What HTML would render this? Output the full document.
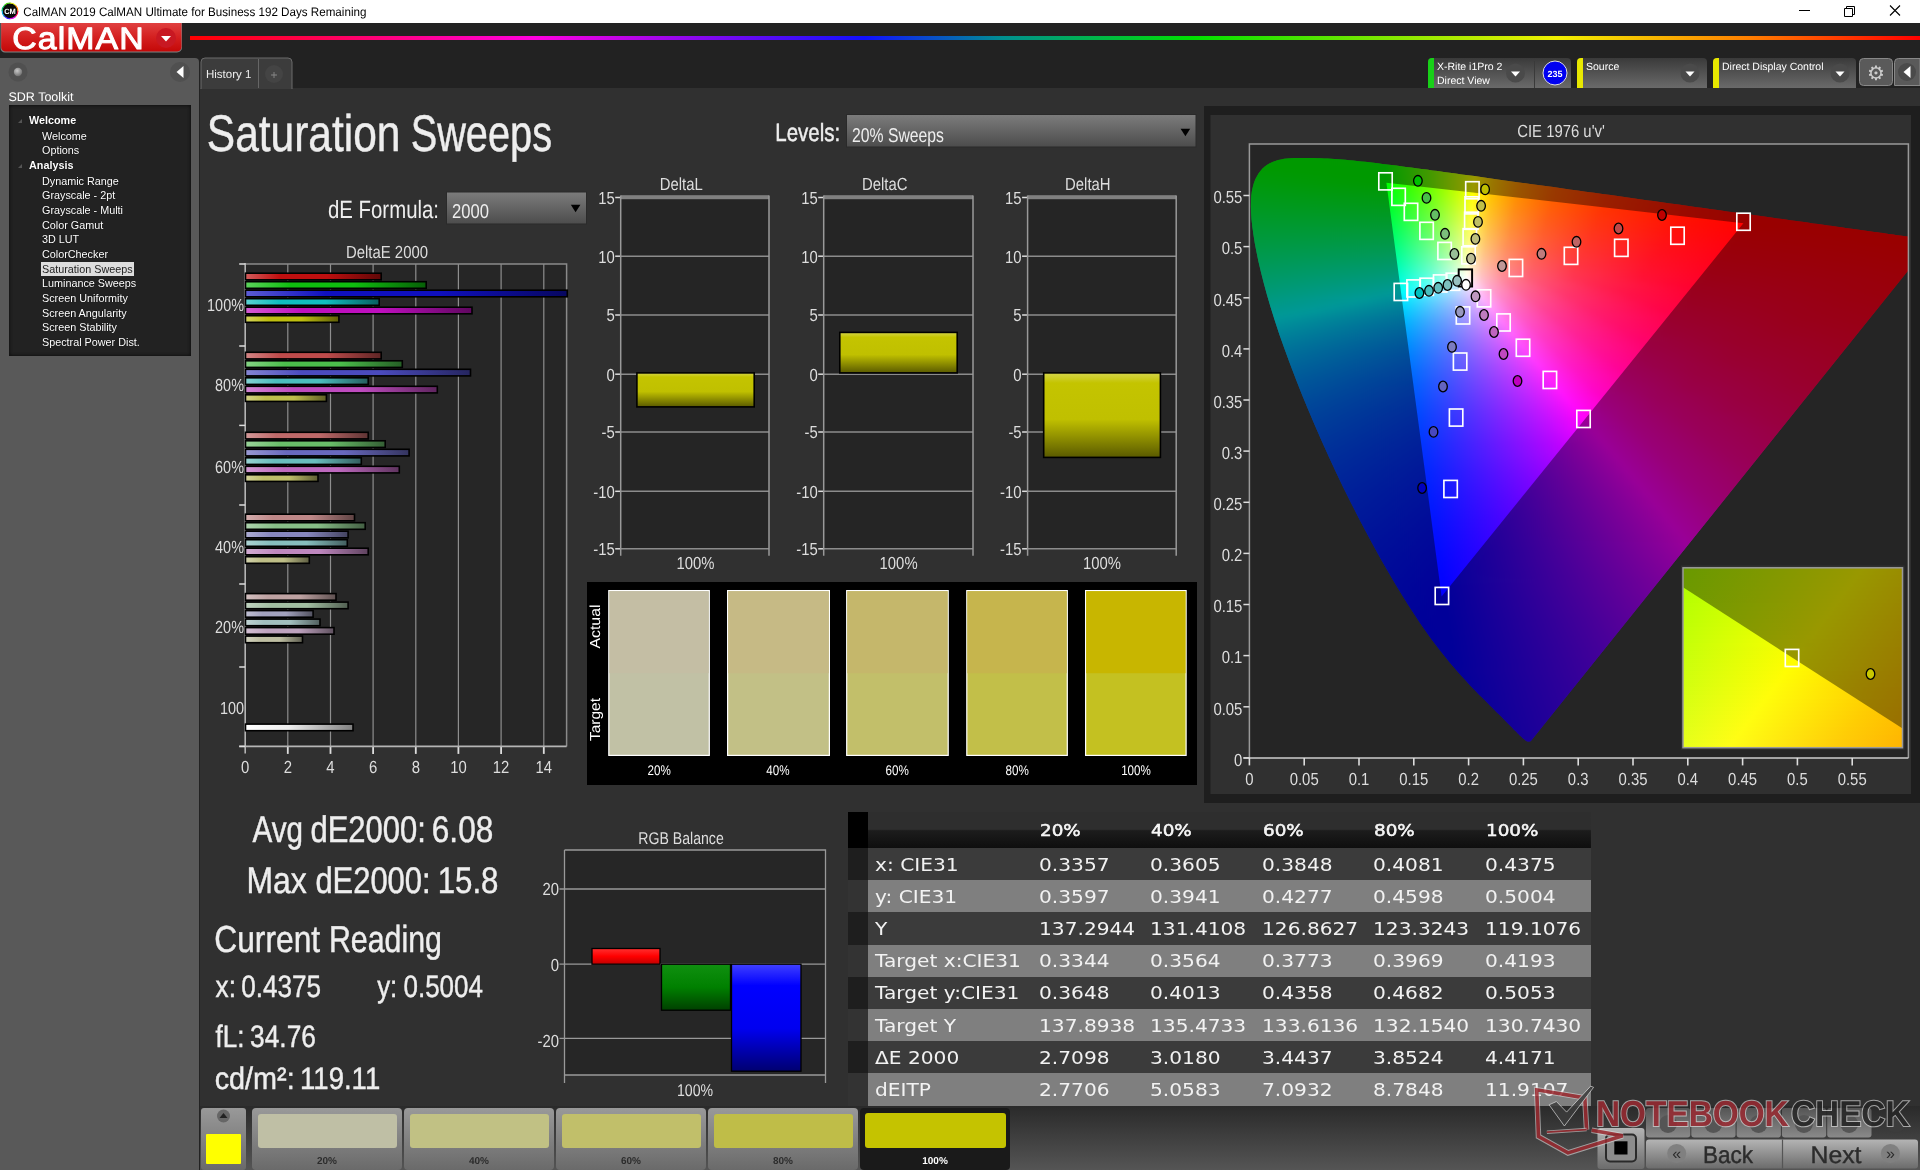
<!DOCTYPE html>
<html lang="en"><head><meta charset="utf-8"><title>CalMAN 2019 - Saturation Sweeps</title>
<style>
html,body{margin:0;padding:0;background:#222;}
body{width:1920px;height:1170px;position:relative;overflow:hidden;font-family:"Liberation Sans",sans-serif;color:#eee;}
.abs{position:absolute;}
#titlebar,#tree,#tbl{will-change:transform}
#titlebar{left:0;top:0;width:1920px;height:23px;background:#fff;color:#000;font-size:11.8px;line-height:25px;}
#titlebar span.t{position:absolute;left:23px;top:0;white-space:nowrap;letter-spacing:-0.1px}
#side{left:0;top:58px;width:199px;height:1112px;background:#595959;border-top-right-radius:4px}
#tree{left:9px;top:105px;width:182px;height:251px;background:#222;box-shadow:inset 0 0 3px 1px #111;}
#tree div{position:absolute;white-space:nowrap;font-size:10.8px;line-height:14px;color:#fff;text-shadow:0 0 1px #000}
#tree div.b{font-weight:bold;left:20px}
#tree div.i{left:33px}
#tree div.sel{background:#ddd;color:#222;text-shadow:none;padding:0 1px;margin-left:-1px}
#main{left:200px;top:88px;width:1720px;height:1018px;background:#303030}
svg text{font-family:"Liberation Sans",sans-serif;text-rendering:geometricPrecision}
#tbl th{padding:0}
#tbl td span{display:inline-block;transform:scaleX(1.12);transform-origin:left center}
#tbl th span{display:inline-block;font-weight:normal;-webkit-text-stroke:0.5px #fff;font-size:16.7px;position:relative;top:-0.7px;left:1px;transform:scaleX(1.1);transform-origin:left center}
#tbl{left:848px;top:812px;width:743px;table-layout:fixed;border-collapse:collapse;font-family:"DejaVu Sans","Liberation Sans",sans-serif;font-size:18px;color:#f2f2f2}
</style></head><body>

<div id="titlebar" class="abs"></div>
<div id="side" class="abs"></div>
<div id="main" class="abs"></div>
<div id="tree" class="abs">
<div class="b" style="top:8px">Welcome</div>
<div class="i" style="top:24px">Welcome</div>
<div class="i" style="top:38px">Options</div>
<div class="b" style="top:53px">Analysis</div>
<div class="i" style="top:69px">Dynamic Range</div>
<div class="i" style="top:83px">Grayscale - 2pt</div>
<div class="i" style="top:98px">Grayscale - Multi</div>
<div class="i" style="top:113px">Color Gamut</div>
<div class="i" style="top:127px">3D LUT</div>
<div class="i" style="top:142px">ColorChecker</div>
<div class="i sel" style="top:157px">Saturation Sweeps</div>
<div class="i" style="top:171px">Luminance Sweeps</div>
<div class="i" style="top:186px">Screen Uniformity</div>
<div class="i" style="top:201px">Screen Angularity</div>
<div class="i" style="top:215px">Screen Stability</div>
<div class="i" style="top:230px">Spectral Power Dist.</div>
</div>
<table id="tbl" class="abs"><thead><tr style="height:36px;background:linear-gradient(#2e2e2e 0,#2e2e2e 48%,#1c1c1c 52%,#0e0e0e 100%)"><th style="width:20px;background:#000"></th><th style="width:170.500px"></th>
<th style="text-align:left;font-weight:normal;width:111.65px;padding:0"><span>20%</span></th>
<th style="text-align:left;font-weight:normal;width:111.65px;padding:0"><span>40%</span></th>
<th style="text-align:left;font-weight:normal;width:111.65px;padding:0"><span>60%</span></th>
<th style="text-align:left;font-weight:normal;width:111.65px;padding:0"><span>80%</span></th>
<th style="text-align:left;font-weight:normal;width:105.9px;padding:0"><span>100%</span></th>
</tr></thead><tbody>
<tr style="height:32.200px;background:#3b3b3b"><td style="background:#1e1e1e;padding:0"></td><td style="padding:0 0 0 6.500px;white-space:nowrap"><span>x: CIE31</span></td><td style="padding:0;white-space:nowrap"><span>0.3357</span></td><td style="padding:0;white-space:nowrap"><span>0.3605</span></td><td style="padding:0;white-space:nowrap"><span>0.3848</span></td><td style="padding:0;white-space:nowrap"><span>0.4081</span></td><td style="padding:0;white-space:nowrap"><span>0.4375</span></td></tr>
<tr style="height:32.200px;background:#7f7f7f"><td style="background:#333;padding:0"></td><td style="padding:0 0 0 6.500px;white-space:nowrap"><span>y: CIE31</span></td><td style="padding:0;white-space:nowrap"><span>0.3597</span></td><td style="padding:0;white-space:nowrap"><span>0.3941</span></td><td style="padding:0;white-space:nowrap"><span>0.4277</span></td><td style="padding:0;white-space:nowrap"><span>0.4598</span></td><td style="padding:0;white-space:nowrap"><span>0.5004</span></td></tr>
<tr style="height:32.200px;background:#3b3b3b"><td style="background:#1e1e1e;padding:0"></td><td style="padding:0 0 0 6.500px;white-space:nowrap"><span>Y</span></td><td style="padding:0;white-space:nowrap"><span>137.2944</span></td><td style="padding:0;white-space:nowrap"><span>131.4108</span></td><td style="padding:0;white-space:nowrap"><span>126.8627</span></td><td style="padding:0;white-space:nowrap"><span>123.3243</span></td><td style="padding:0;white-space:nowrap"><span>119.1076</span></td></tr>
<tr style="height:32.200px;background:#7f7f7f"><td style="background:#333;padding:0"></td><td style="padding:0 0 0 6.500px;white-space:nowrap"><span>Target x:CIE31</span></td><td style="padding:0;white-space:nowrap"><span>0.3344</span></td><td style="padding:0;white-space:nowrap"><span>0.3564</span></td><td style="padding:0;white-space:nowrap"><span>0.3773</span></td><td style="padding:0;white-space:nowrap"><span>0.3969</span></td><td style="padding:0;white-space:nowrap"><span>0.4193</span></td></tr>
<tr style="height:32.200px;background:#3b3b3b"><td style="background:#1e1e1e;padding:0"></td><td style="padding:0 0 0 6.500px;white-space:nowrap"><span>Target y:CIE31</span></td><td style="padding:0;white-space:nowrap"><span>0.3648</span></td><td style="padding:0;white-space:nowrap"><span>0.4013</span></td><td style="padding:0;white-space:nowrap"><span>0.4358</span></td><td style="padding:0;white-space:nowrap"><span>0.4682</span></td><td style="padding:0;white-space:nowrap"><span>0.5053</span></td></tr>
<tr style="height:32.200px;background:#7f7f7f"><td style="background:#333;padding:0"></td><td style="padding:0 0 0 6.500px;white-space:nowrap"><span>Target Y</span></td><td style="padding:0;white-space:nowrap"><span>137.8938</span></td><td style="padding:0;white-space:nowrap"><span>135.4733</span></td><td style="padding:0;white-space:nowrap"><span>133.6136</span></td><td style="padding:0;white-space:nowrap"><span>132.1540</span></td><td style="padding:0;white-space:nowrap"><span>130.7430</span></td></tr>
<tr style="height:32.200px;background:#3b3b3b"><td style="background:#1e1e1e;padding:0"></td><td style="padding:0 0 0 6.500px;white-space:nowrap"><span>ΔE 2000</span></td><td style="padding:0;white-space:nowrap"><span>2.7098</span></td><td style="padding:0;white-space:nowrap"><span>3.0180</span></td><td style="padding:0;white-space:nowrap"><span>3.4437</span></td><td style="padding:0;white-space:nowrap"><span>3.8524</span></td><td style="padding:0;white-space:nowrap"><span>4.4171</span></td></tr>
<tr style="height:32.200px;background:#7f7f7f"><td style="background:#333;padding:0"></td><td style="padding:0 0 0 6.500px;white-space:nowrap"><span>dEITP</span></td><td style="padding:0;white-space:nowrap"><span>2.7706</span></td><td style="padding:0;white-space:nowrap"><span>5.0583</span></td><td style="padding:0;white-space:nowrap"><span>7.0932</span></td><td style="padding:0;white-space:nowrap"><span>8.7848</span></td><td style="padding:0;white-space:nowrap"><span>11.9107</span></td></tr>
</tbody></table>
<svg class="abs" style="left:0;top:0;will-change:transform" width="1920" height="1170" viewBox="0 0 1920 1170">
<defs>
<linearGradient id="rain" x1="0" x2="1" y1="0" y2="0">
<stop offset="0" stop-color="#ff0000"/><stop offset="0.2" stop-color="#ff00e0"/><stop offset="0.39" stop-color="#1010ff"/>
<stop offset="0.47" stop-color="#009090"/><stop offset="0.58" stop-color="#00e000"/><stop offset="0.79" stop-color="#f0f000"/>
<stop offset="0.9" stop-color="#ff8000"/><stop offset="1" stop-color="#ff0000"/></linearGradient>
<linearGradient id="redbtn" x1="0" x2="0" y1="0" y2="1"><stop offset="0" stop-color="#e04040"/><stop offset="0.5" stop-color="#d42020"/><stop offset="1" stop-color="#c40808"/></linearGradient>
<linearGradient id="tbbtn" x1="0" x2="0" y1="0" y2="1"><stop offset="0" stop-color="#3a3a3a"/><stop offset="1" stop-color="#6a6a6a"/></linearGradient>
<linearGradient id="ddg" x1="0" x2="0" y1="0" y2="1"><stop offset="0" stop-color="#7c7c7c"/><stop offset="1" stop-color="#4c4c4c"/></linearGradient>
<linearGradient id="botg" x1="0" x2="0" y1="0" y2="1"><stop offset="0" stop-color="#2a2a2a"/><stop offset="1" stop-color="#555"/></linearGradient>
<linearGradient id="swb" x1="0" x2="0" y1="0" y2="1"><stop offset="0" stop-color="#999"/><stop offset="1" stop-color="#6a6a6a"/></linearGradient>
<linearGradient id="ybar" x1="0" x2="0" y1="0" y2="1"><stop offset="0" stop-color="#d4d44a"/><stop offset="0.12" stop-color="#c4c400"/><stop offset="0.55" stop-color="#c0c000"/><stop offset="1" stop-color="#5a5a00"/></linearGradient>
<linearGradient id="rbar" x1="0" x2="0" y1="0" y2="1"><stop offset="0" stop-color="#ff3030"/><stop offset="0.5" stop-color="#ff0000"/><stop offset="1" stop-color="#c00000"/></linearGradient>
<linearGradient id="gbar" x1="0" x2="0" y1="0" y2="1"><stop offset="0" stop-color="#109010"/><stop offset="0.5" stop-color="#008000"/><stop offset="1" stop-color="#004000"/></linearGradient>
<linearGradient id="bbar" x1="0" x2="0" y1="0" y2="1"><stop offset="0" stop-color="#4040ff"/><stop offset="0.2" stop-color="#0000ff"/><stop offset="0.6" stop-color="#0000f0"/><stop offset="1" stop-color="#000070"/></linearGradient>

</defs>
<rect x="190" y="36" width="1730" height="4" fill="url(#rain)"/>
<path d="M0.500 23H182V47.500a5 5 0 0 1-5 5H5a4.500 4.500 0 0 1-4.500-4.500Z" fill="#7c8484"/><path d="M1.200 23H181.500V47a4.500 4.500 0 0 1-4.500 4.500H5.500a4.300 4.300 0 0 1-4.300-4.300Z" fill="url(#redbtn)"/>
<text x="12.300" y="48.600" font-size="31" fill="#fff" stroke="#fff" stroke-width="1" stroke-linejoin="round" textLength="132.500" lengthAdjust="spacingAndGlyphs" letter-spacing="1">CalMAN</text>
<circle cx="166" cy="38" r="10" fill="#c81822"/><path d="M161 36h10l-5 5.5z" fill="#fff"/>
<circle cx="10" cy="10.900" r="7.600" fill="#0a0a0a"/><path d="M10.00 3.00A7.9 7.9 0 0 1 15.86 5.60" fill="none" stroke="#e8e800" stroke-width="1.1"/><path d="M15.59 5.31A7.9 7.9 0 0 1 17.89 11.29" fill="none" stroke="#ff8000" stroke-width="1.1"/><path d="M17.90 10.90A7.9 7.9 0 0 1 15.30 16.76" fill="none" stroke="#ff0040" stroke-width="1.1"/><path d="M15.59 16.49A7.9 7.9 0 0 1 9.61 18.79" fill="none" stroke="#e000e0" stroke-width="1.1"/><path d="M10.00 18.80A7.9 7.9 0 0 1 4.14 16.20" fill="none" stroke="#4020ff" stroke-width="1.1"/><path d="M4.41 16.49A7.9 7.9 0 0 1 2.11 10.51" fill="none" stroke="#00a0e0" stroke-width="1.1"/><path d="M2.10 10.90A7.9 7.9 0 0 1 4.70 5.04" fill="none" stroke="#00c060" stroke-width="1.1"/><path d="M4.41 5.31A7.9 7.9 0 0 1 10.39 3.01" fill="none" stroke="#40d000" stroke-width="1.1"/><text x="10" y="13.600" font-size="7.500" font-weight="bold" fill="#fff" text-anchor="middle">CM</text>
<text x="23.3" y="15.6" font-size="12.3" fill="#000" textLength="343.1" lengthAdjust="spacingAndGlyphs">CalMAN 2019 CalMAN Ultimate for Business 192 Days Remaining</text>
<path d="M1799 10.5h11" stroke="#000" stroke-width="1"/><path d="M1844.5 8.500h8v8h-8z M1846.500 8.500v-2h8v8h-2" fill="none" stroke="#000" stroke-width="1"/><path d="M1890 5.500l10 10M1900 5.500l-10 10" stroke="#000" stroke-width="1.1"/>
<radialGradient id="sph" cx="0.4" cy="0.35" r="0.7"><stop offset="0" stop-color="#c8c8c8"/><stop offset="1" stop-color="#6a6a6a"/></radialGradient><circle cx="18" cy="72" r="9.500" fill="#505050"/><circle cx="18" cy="72" r="4.200" fill="url(#sph)"/>
<circle cx="180" cy="72" r="10" fill="#505050"/><path d="M183.500 66v12l-7-6z" fill="#fff"/>
<text x="8.500" y="101" font-size="12.500" fill="#fff">SDR Toolkit</text>
<path d="M22 119v4h-4z" fill="#555"/>
<path d="M22 164v4h-4z" fill="#555"/>
<path d="M201 89V62a4 4 0 0 1 4-4H288a4 4 0 0 1 4 4V89" fill="#3c3c3c" stroke="#6a6a6a" stroke-width="1"/>
<path d="M258.500 59v29" stroke="#666"/>
<text x="206" y="78" font-size="11.500" fill="#eee">History 1</text>
<circle cx="274" cy="74" r="9" fill="#444"/><text x="274" y="78.500" font-size="12" fill="#888" text-anchor="middle">+</text>
<path d="M1428 88V62a4 4 0 0 1 4-4H1567a4 4 0 0 1 4 4V88Z" fill="url(#tbbtn)"/>
<path d="M1428 88V62a4 4 0 0 1 4-4h2V88Z" fill="#18d018"/>
<text x="1437" y="70" font-size="10.500" fill="#fff">X-Rite i1Pro 2</text>
<text x="1437" y="84" font-size="10.500" fill="#fff">Direct View</text>
<circle cx="1515.5" cy="73" r="9.500" fill="#4a4a4a"/><path d="M1511.0 71.500h9l-4.500 5z" fill="#fff"/>
<path d="M1534.500 61v27" stroke="#3a3a3a"/>
<circle cx="1555" cy="73" r="12" fill="#0000f0" stroke="#ddd" stroke-width="1"/><text x="1555" y="76.500" font-size="9" font-weight="bold" fill="#fff" text-anchor="middle">235</text>
<path d="M1577 88V62a4 4 0 0 1 4-4H1703a4 4 0 0 1 4 4V88Z" fill="url(#tbbtn)"/>
<path d="M1577 88V62a4 4 0 0 1 4-4h2V88Z" fill="#e8e800"/>
<text x="1586" y="70" font-size="10.500" fill="#fff">Source</text>
<circle cx="1690" cy="73" r="9.500" fill="#4a4a4a"/><path d="M1685.5 71.500h9l-4.500 5z" fill="#fff"/>
<path d="M1713 88V62a4 4 0 0 1 4-4H1852a4 4 0 0 1 4 4V88Z" fill="url(#tbbtn)"/>
<path d="M1713 88V62a4 4 0 0 1 4-4h2V88Z" fill="#e8e800"/>
<text x="1722" y="70" font-size="10.500" fill="#fff">Direct Display Control</text>
<circle cx="1840" cy="73" r="9.500" fill="#4a4a4a"/><path d="M1835.5 71.500h9l-4.500 5z" fill="#fff"/>
<rect x="1859.500" y="58.500" width="33" height="27" rx="4" fill="#5a5a5a" stroke="#888"/>
<text x="1876" y="80" font-size="20" fill="#ccc" text-anchor="middle">⚙</text>
<path d="M1894.500 85.500V62.500a4 4 0 0 1 4-4H1920V85.500Z" fill="#5a5a5a" stroke="#888"/><circle cx="1907" cy="72" r="9" fill="#4a4a4a"/><path d="M1910.500 66v12l-7-6z" fill="#fff"/>
<text x="206.8" y="151.0" font-size="51.5" fill="#eee" textLength="193.7" lengthAdjust="spacingAndGlyphs" stroke="#eee" stroke-width="0.45">Saturation</text>
<text x="410.7" y="151.0" font-size="51.5" fill="#eee" textLength="141.3" lengthAdjust="spacingAndGlyphs" stroke="#eee" stroke-width="0.45">Sweeps</text>
<text x="775.3" y="141.0" font-size="25" fill="#eee" textLength="65.0" lengthAdjust="spacingAndGlyphs" stroke="#eee" stroke-width="0.45">Levels:</text>
<rect x="846.500" y="114.500" width="349.500" height="32.500" fill="url(#ddg)" stroke="#2a2a2a"/>
<text x="852.0" y="142.0" font-size="20" text-anchor="start" fill="#eee" textLength="92.0" lengthAdjust="spacingAndGlyphs">20% Sweeps</text>
<path d="M1180.600 128.700h9.600l-4.800 7.500z" fill="#000"/>
<text x="439.0" y="218.0" font-size="25" text-anchor="end" fill="#eee" textLength="111.0" lengthAdjust="spacingAndGlyphs">dE Formula:</text>
<rect x="446.500" y="192" width="140" height="32" fill="url(#ddg)" stroke="#2a2a2a"/>
<text x="452.0" y="218.0" font-size="20" text-anchor="start" fill="#eee" textLength="37.0" lengthAdjust="spacingAndGlyphs">2000</text>
<path d="M570.800 204.800h9.600l-4.800 7.500z" fill="#000"/>
<rect x="245.2" y="264" width="321.40000000000003" height="482.4" fill="#262626"/>
<path d="M287.8 264V746.4" stroke="#8e8e8e" stroke-width="1.2"/><path d="M287.8 746.4v7.500" stroke="#ddd" stroke-width="1.8"/>
<text x="287.8" y="773.0" font-size="17.5" text-anchor="middle" fill="#ddd" textLength="8.3" lengthAdjust="spacingAndGlyphs">2</text>
<path d="M330.5 264V746.4" stroke="#8e8e8e" stroke-width="1.2"/><path d="M330.5 746.4v7.500" stroke="#ddd" stroke-width="1.8"/>
<text x="330.5" y="773.0" font-size="17.5" text-anchor="middle" fill="#ddd" textLength="8.3" lengthAdjust="spacingAndGlyphs">4</text>
<path d="M373.1 264V746.4" stroke="#8e8e8e" stroke-width="1.2"/><path d="M373.1 746.4v7.500" stroke="#ddd" stroke-width="1.8"/>
<text x="373.1" y="773.0" font-size="17.5" text-anchor="middle" fill="#ddd" textLength="8.3" lengthAdjust="spacingAndGlyphs">6</text>
<path d="M415.8 264V746.4" stroke="#8e8e8e" stroke-width="1.2"/><path d="M415.8 746.4v7.500" stroke="#ddd" stroke-width="1.8"/>
<text x="415.8" y="773.0" font-size="17.5" text-anchor="middle" fill="#ddd" textLength="8.3" lengthAdjust="spacingAndGlyphs">8</text>
<path d="M458.4 264V746.4" stroke="#8e8e8e" stroke-width="1.2"/><path d="M458.4 746.4v7.500" stroke="#ddd" stroke-width="1.8"/>
<text x="458.4" y="773.0" font-size="17.5" text-anchor="middle" fill="#ddd" textLength="16.5" lengthAdjust="spacingAndGlyphs">10</text>
<path d="M501.1 264V746.4" stroke="#8e8e8e" stroke-width="1.2"/><path d="M501.1 746.4v7.500" stroke="#ddd" stroke-width="1.8"/>
<text x="501.1" y="773.0" font-size="17.5" text-anchor="middle" fill="#ddd" textLength="16.5" lengthAdjust="spacingAndGlyphs">12</text>
<path d="M543.8 264V746.4" stroke="#8e8e8e" stroke-width="1.2"/><path d="M543.8 746.4v7.500" stroke="#ddd" stroke-width="1.8"/>
<text x="543.8" y="773.0" font-size="17.5" text-anchor="middle" fill="#ddd" textLength="16.5" lengthAdjust="spacingAndGlyphs">14</text>
<text x="245.2" y="773.0" font-size="17.5" text-anchor="middle" fill="#ddd" textLength="8.3" lengthAdjust="spacingAndGlyphs">0</text>
<path d="M245.2 264H566.6V746.4" fill="none" stroke="#8a8a8a" stroke-width="1.5"/>
<path d="M245.2 263V753.4M239.2 746.4H566.6" fill="none" stroke="#b4b4b4" stroke-width="1.6"/>
<path d="M239.2 264.0H245.2" stroke="#ddd" stroke-width="1.5"/>
<path d="M239.2 346.0H245.2" stroke="#ddd" stroke-width="1.5"/>
<path d="M239.2 425.4H245.2" stroke="#ddd" stroke-width="1.5"/>
<path d="M239.2 505.0H245.2" stroke="#ddd" stroke-width="1.5"/>
<path d="M239.2 584.0H245.2" stroke="#ddd" stroke-width="1.5"/>
<path d="M239.2 667.0H245.2" stroke="#ddd" stroke-width="1.5"/>
<path d="M239.2 746.4H245.2" stroke="#ddd" stroke-width="1.5"/>
<text x="387.0" y="258.0" font-size="17.5" text-anchor="middle" fill="#ddd" textLength="82.0" lengthAdjust="spacingAndGlyphs">DeltaE 2000</text>
<text x="244.0" y="311.3" font-size="17.5" text-anchor="end" fill="#ddd" textLength="36.9" lengthAdjust="spacingAndGlyphs">100%</text>
<text x="244.0" y="391.3" font-size="17.5" text-anchor="end" fill="#ddd" textLength="28.9" lengthAdjust="spacingAndGlyphs">80%</text>
<text x="244.0" y="473.3" font-size="17.5" text-anchor="end" fill="#ddd" textLength="28.9" lengthAdjust="spacingAndGlyphs">60%</text>
<text x="244.0" y="553.3" font-size="17.5" text-anchor="end" fill="#ddd" textLength="28.9" lengthAdjust="spacingAndGlyphs">40%</text>
<text x="244.0" y="633.3" font-size="17.5" text-anchor="end" fill="#ddd" textLength="28.9" lengthAdjust="spacingAndGlyphs">20%</text>
<text x="244.0" y="714.3" font-size="17.5" text-anchor="end" fill="#ddd" textLength="24.1" lengthAdjust="spacingAndGlyphs">100</text>
<linearGradient id="bg1"><stop offset="0" stop-color="rgb(211, 92, 92)"/><stop offset="0.25" stop-color="rgb(190, 15, 15)"/><stop offset="0.6" stop-color="rgb(190, 15, 15)"/><stop offset="1" stop-color="rgb(95, 7, 7)"/></linearGradient>
<rect x="245.5" y="273.2" width="135.7" height="6.600" fill="url(#bg1)" stroke="#000" stroke-width="1.6"/>
<linearGradient id="bg2"><stop offset="0" stop-color="rgb(92, 211, 92)"/><stop offset="0.25" stop-color="rgb(15, 190, 15)"/><stop offset="0.6" stop-color="rgb(15, 190, 15)"/><stop offset="1" stop-color="rgb(7, 95, 7)"/></linearGradient>
<rect x="245.5" y="281.7" width="180.7" height="6.600" fill="url(#bg2)" stroke="#000" stroke-width="1.6"/>
<linearGradient id="bg3"><stop offset="0" stop-color="rgb(92, 92, 211)"/><stop offset="0.25" stop-color="rgb(15, 15, 190)"/><stop offset="0.6" stop-color="rgb(15, 15, 190)"/><stop offset="1" stop-color="rgb(7, 7, 95)"/></linearGradient>
<rect x="245.5" y="290.2" width="321.8" height="6.600" fill="url(#bg3)" stroke="#000" stroke-width="1.6"/>
<linearGradient id="bg4"><stop offset="0" stop-color="rgb(92, 211, 211)"/><stop offset="0.25" stop-color="rgb(15, 190, 190)"/><stop offset="0.6" stop-color="rgb(15, 190, 190)"/><stop offset="1" stop-color="rgb(7, 95, 95)"/></linearGradient>
<rect x="245.5" y="298.7" width="133.7" height="6.600" fill="url(#bg4)" stroke="#000" stroke-width="1.6"/>
<linearGradient id="bg5"><stop offset="0" stop-color="rgb(211, 92, 211)"/><stop offset="0.25" stop-color="rgb(190, 15, 190)"/><stop offset="0.6" stop-color="rgb(190, 15, 190)"/><stop offset="1" stop-color="rgb(95, 7, 95)"/></linearGradient>
<rect x="245.5" y="307.2" width="226.5" height="6.600" fill="url(#bg5)" stroke="#000" stroke-width="1.6"/>
<linearGradient id="bg6"><stop offset="0" stop-color="rgb(211, 211, 92)"/><stop offset="0.25" stop-color="rgb(190, 190, 15)"/><stop offset="0.6" stop-color="rgb(190, 190, 15)"/><stop offset="1" stop-color="rgb(95, 95, 7)"/></linearGradient>
<rect x="245.5" y="315.7" width="93.4" height="6.600" fill="url(#bg6)" stroke="#000" stroke-width="1.6"/>
<linearGradient id="bg7"><stop offset="0" stop-color="rgb(211, 133, 133)"/><stop offset="0.25" stop-color="rgb(190, 75, 75)"/><stop offset="0.6" stop-color="rgb(190, 75, 75)"/><stop offset="1" stop-color="rgb(95, 37, 37)"/></linearGradient>
<rect x="245.5" y="352.3" width="135.7" height="6.600" fill="url(#bg7)" stroke="#000" stroke-width="1.6"/>
<linearGradient id="bg8"><stop offset="0" stop-color="rgb(133, 211, 133)"/><stop offset="0.25" stop-color="rgb(75, 190, 75)"/><stop offset="0.6" stop-color="rgb(75, 190, 75)"/><stop offset="1" stop-color="rgb(37, 95, 37)"/></linearGradient>
<rect x="245.5" y="360.8" width="156.8" height="6.600" fill="url(#bg8)" stroke="#000" stroke-width="1.6"/>
<linearGradient id="bg9"><stop offset="0" stop-color="rgb(133, 133, 211)"/><stop offset="0.25" stop-color="rgb(75, 75, 190)"/><stop offset="0.6" stop-color="rgb(75, 75, 190)"/><stop offset="1" stop-color="rgb(37, 37, 95)"/></linearGradient>
<rect x="245.5" y="369.3" width="225.0" height="6.600" fill="url(#bg9)" stroke="#000" stroke-width="1.6"/>
<linearGradient id="bg10"><stop offset="0" stop-color="rgb(133, 211, 211)"/><stop offset="0.25" stop-color="rgb(75, 190, 190)"/><stop offset="0.6" stop-color="rgb(75, 190, 190)"/><stop offset="1" stop-color="rgb(37, 95, 95)"/></linearGradient>
<rect x="245.5" y="377.8" width="122.7" height="6.600" fill="url(#bg10)" stroke="#000" stroke-width="1.6"/>
<linearGradient id="bg11"><stop offset="0" stop-color="rgb(211, 133, 211)"/><stop offset="0.25" stop-color="rgb(190, 75, 190)"/><stop offset="0.6" stop-color="rgb(190, 75, 190)"/><stop offset="1" stop-color="rgb(95, 37, 95)"/></linearGradient>
<rect x="245.5" y="386.3" width="191.8" height="6.600" fill="url(#bg11)" stroke="#000" stroke-width="1.6"/>
<linearGradient id="bg12"><stop offset="0" stop-color="rgb(211, 211, 133)"/><stop offset="0.25" stop-color="rgb(190, 190, 75)"/><stop offset="0.6" stop-color="rgb(190, 190, 75)"/><stop offset="1" stop-color="rgb(95, 95, 37)"/></linearGradient>
<rect x="245.5" y="394.8" width="80.9" height="6.600" fill="url(#bg12)" stroke="#000" stroke-width="1.6"/>
<linearGradient id="bg13"><stop offset="0" stop-color="rgb(211, 153, 153)"/><stop offset="0.25" stop-color="rgb(190, 105, 105)"/><stop offset="0.6" stop-color="rgb(190, 105, 105)"/><stop offset="1" stop-color="rgb(95, 52, 52)"/></linearGradient>
<rect x="245.5" y="432.3" width="122.7" height="6.600" fill="url(#bg13)" stroke="#000" stroke-width="1.6"/>
<linearGradient id="bg14"><stop offset="0" stop-color="rgb(153, 211, 153)"/><stop offset="0.25" stop-color="rgb(105, 190, 105)"/><stop offset="0.6" stop-color="rgb(105, 190, 105)"/><stop offset="1" stop-color="rgb(52, 95, 52)"/></linearGradient>
<rect x="245.5" y="440.8" width="139.7" height="6.600" fill="url(#bg14)" stroke="#000" stroke-width="1.6"/>
<linearGradient id="bg15"><stop offset="0" stop-color="rgb(153, 153, 211)"/><stop offset="0.25" stop-color="rgb(105, 105, 190)"/><stop offset="0.6" stop-color="rgb(105, 105, 190)"/><stop offset="1" stop-color="rgb(52, 52, 95)"/></linearGradient>
<rect x="245.5" y="449.3" width="163.6" height="6.600" fill="url(#bg15)" stroke="#000" stroke-width="1.6"/>
<linearGradient id="bg16"><stop offset="0" stop-color="rgb(153, 211, 211)"/><stop offset="0.25" stop-color="rgb(105, 190, 190)"/><stop offset="0.6" stop-color="rgb(105, 190, 190)"/><stop offset="1" stop-color="rgb(52, 95, 95)"/></linearGradient>
<rect x="245.5" y="457.8" width="115.8" height="6.600" fill="url(#bg16)" stroke="#000" stroke-width="1.6"/>
<linearGradient id="bg17"><stop offset="0" stop-color="rgb(211, 153, 211)"/><stop offset="0.25" stop-color="rgb(190, 105, 190)"/><stop offset="0.6" stop-color="rgb(190, 105, 190)"/><stop offset="1" stop-color="rgb(95, 52, 95)"/></linearGradient>
<rect x="245.5" y="466.3" width="153.8" height="6.600" fill="url(#bg17)" stroke="#000" stroke-width="1.6"/>
<linearGradient id="bg18"><stop offset="0" stop-color="rgb(211, 211, 153)"/><stop offset="0.25" stop-color="rgb(190, 190, 105)"/><stop offset="0.6" stop-color="rgb(190, 190, 105)"/><stop offset="1" stop-color="rgb(95, 95, 52)"/></linearGradient>
<rect x="245.5" y="474.8" width="72.5" height="6.600" fill="url(#bg18)" stroke="#000" stroke-width="1.6"/>
<linearGradient id="bg19"><stop offset="0" stop-color="rgb(211, 173, 173)"/><stop offset="0.25" stop-color="rgb(190, 135, 135)"/><stop offset="0.6" stop-color="rgb(190, 135, 135)"/><stop offset="1" stop-color="rgb(95, 67, 67)"/></linearGradient>
<rect x="245.5" y="514.2" width="109.0" height="6.600" fill="url(#bg19)" stroke="#000" stroke-width="1.6"/>
<linearGradient id="bg20"><stop offset="0" stop-color="rgb(173, 211, 173)"/><stop offset="0.25" stop-color="rgb(135, 190, 135)"/><stop offset="0.6" stop-color="rgb(135, 190, 135)"/><stop offset="1" stop-color="rgb(67, 95, 67)"/></linearGradient>
<rect x="245.5" y="522.7" width="119.7" height="6.600" fill="url(#bg20)" stroke="#000" stroke-width="1.6"/>
<linearGradient id="bg21"><stop offset="0" stop-color="rgb(173, 173, 211)"/><stop offset="0.25" stop-color="rgb(135, 135, 190)"/><stop offset="0.6" stop-color="rgb(135, 135, 190)"/><stop offset="1" stop-color="rgb(67, 67, 95)"/></linearGradient>
<rect x="245.5" y="531.2" width="102.6" height="6.600" fill="url(#bg21)" stroke="#000" stroke-width="1.6"/>
<linearGradient id="bg22"><stop offset="0" stop-color="rgb(173, 211, 211)"/><stop offset="0.25" stop-color="rgb(135, 190, 190)"/><stop offset="0.6" stop-color="rgb(135, 190, 190)"/><stop offset="1" stop-color="rgb(67, 95, 95)"/></linearGradient>
<rect x="245.5" y="539.7" width="101.8" height="6.600" fill="url(#bg22)" stroke="#000" stroke-width="1.6"/>
<linearGradient id="bg23"><stop offset="0" stop-color="rgb(211, 173, 211)"/><stop offset="0.25" stop-color="rgb(190, 135, 190)"/><stop offset="0.6" stop-color="rgb(190, 135, 190)"/><stop offset="1" stop-color="rgb(95, 67, 95)"/></linearGradient>
<rect x="245.5" y="548.2" width="122.7" height="6.600" fill="url(#bg23)" stroke="#000" stroke-width="1.6"/>
<linearGradient id="bg24"><stop offset="0" stop-color="rgb(211, 211, 173)"/><stop offset="0.25" stop-color="rgb(190, 190, 135)"/><stop offset="0.6" stop-color="rgb(190, 190, 135)"/><stop offset="1" stop-color="rgb(95, 95, 67)"/></linearGradient>
<rect x="245.5" y="556.7" width="63.8" height="6.600" fill="url(#bg24)" stroke="#000" stroke-width="1.6"/>
<linearGradient id="bg25"><stop offset="0" stop-color="rgb(211, 192, 192)"/><stop offset="0.25" stop-color="rgb(190, 162, 162)"/><stop offset="0.6" stop-color="rgb(190, 162, 162)"/><stop offset="1" stop-color="rgb(95, 81, 81)"/></linearGradient>
<rect x="245.5" y="593.6" width="90.5" height="6.600" fill="url(#bg25)" stroke="#000" stroke-width="1.6"/>
<linearGradient id="bg26"><stop offset="0" stop-color="rgb(192, 211, 192)"/><stop offset="0.25" stop-color="rgb(162, 190, 162)"/><stop offset="0.6" stop-color="rgb(162, 190, 162)"/><stop offset="1" stop-color="rgb(81, 95, 81)"/></linearGradient>
<rect x="245.5" y="602.1" width="102.6" height="6.600" fill="url(#bg26)" stroke="#000" stroke-width="1.6"/>
<linearGradient id="bg27"><stop offset="0" stop-color="rgb(192, 192, 211)"/><stop offset="0.25" stop-color="rgb(162, 162, 190)"/><stop offset="0.6" stop-color="rgb(162, 162, 190)"/><stop offset="1" stop-color="rgb(81, 81, 95)"/></linearGradient>
<rect x="245.5" y="610.6" width="67.6" height="6.600" fill="url(#bg27)" stroke="#000" stroke-width="1.6"/>
<linearGradient id="bg28"><stop offset="0" stop-color="rgb(192, 211, 211)"/><stop offset="0.25" stop-color="rgb(162, 190, 190)"/><stop offset="0.6" stop-color="rgb(162, 190, 190)"/><stop offset="1" stop-color="rgb(81, 95, 95)"/></linearGradient>
<rect x="245.5" y="619.1" width="74.5" height="6.600" fill="url(#bg28)" stroke="#000" stroke-width="1.6"/>
<linearGradient id="bg29"><stop offset="0" stop-color="rgb(211, 192, 211)"/><stop offset="0.25" stop-color="rgb(190, 162, 190)"/><stop offset="0.6" stop-color="rgb(190, 162, 190)"/><stop offset="1" stop-color="rgb(95, 81, 95)"/></linearGradient>
<rect x="245.5" y="627.6" width="88.5" height="6.600" fill="url(#bg29)" stroke="#000" stroke-width="1.6"/>
<linearGradient id="bg30"><stop offset="0" stop-color="rgb(211, 211, 192)"/><stop offset="0.25" stop-color="rgb(190, 190, 162)"/><stop offset="0.6" stop-color="rgb(190, 190, 162)"/><stop offset="1" stop-color="rgb(95, 95, 81)"/></linearGradient>
<rect x="245.5" y="636.1" width="57.0" height="6.600" fill="url(#bg30)" stroke="#000" stroke-width="1.6"/>
<linearGradient id="bgw"><stop offset="0" stop-color="#fff"/><stop offset="0.4" stop-color="#eee"/><stop offset="1" stop-color="#808080"/></linearGradient>
<rect x="245.5" y="724.1" width="107.5" height="6.600" fill="url(#bgw)" stroke="#000" stroke-width="1.6"/>
<rect x="620.7" y="197.5" width="148.29999999999995" height="351.29999999999995" fill="#252525"/>
<rect x="620.7" y="195.2" width="148.29999999999995" height="4" fill="#808080"/>
<path d="M615.2 197.5H620.7" stroke="#ddd" stroke-width="1.5"/>
<text x="614.7" y="203.8" font-size="17.5" text-anchor="end" fill="#ddd" textLength="16.5" lengthAdjust="spacingAndGlyphs">15</text>
<path d="M620.7 256.2H769" stroke="#8c8c8c" stroke-width="1.4"/>
<path d="M615.2 256.2H620.7" stroke="#ddd" stroke-width="1.5"/>
<text x="614.7" y="262.5" font-size="17.5" text-anchor="end" fill="#ddd" textLength="16.5" lengthAdjust="spacingAndGlyphs">10</text>
<path d="M620.7 315.0H769" stroke="#8c8c8c" stroke-width="1.4"/>
<path d="M615.2 315.0H620.7" stroke="#ddd" stroke-width="1.5"/>
<text x="614.7" y="321.3" font-size="17.5" text-anchor="end" fill="#ddd" textLength="8.3" lengthAdjust="spacingAndGlyphs">5</text>
<path d="M620.7 374.2H769" stroke="#8c8c8c" stroke-width="1.4"/>
<path d="M615.2 374.2H620.7" stroke="#ddd" stroke-width="1.5"/>
<text x="614.7" y="380.5" font-size="17.5" text-anchor="end" fill="#ddd" textLength="8.3" lengthAdjust="spacingAndGlyphs">0</text>
<path d="M620.7 432.0H769" stroke="#8c8c8c" stroke-width="1.4"/>
<path d="M615.2 432.0H620.7" stroke="#ddd" stroke-width="1.5"/>
<text x="614.7" y="438.3" font-size="17.5" text-anchor="end" fill="#ddd" textLength="13.2" lengthAdjust="spacingAndGlyphs">-5</text>
<path d="M620.7 491.3H769" stroke="#8c8c8c" stroke-width="1.4"/>
<path d="M615.2 491.3H620.7" stroke="#ddd" stroke-width="1.5"/>
<text x="614.7" y="497.6" font-size="17.5" text-anchor="end" fill="#ddd" textLength="21.5" lengthAdjust="spacingAndGlyphs">-10</text>
<path d="M620.7 548.8H769" stroke="#8c8c8c" stroke-width="1.4"/>
<path d="M615.2 548.8H620.7" stroke="#ddd" stroke-width="1.5"/>
<text x="614.7" y="555.1" font-size="17.5" text-anchor="end" fill="#ddd" textLength="21.5" lengthAdjust="spacingAndGlyphs">-15</text>
<path d="M620.7 195.5V555.8M769 195.5V555.8" stroke="#999" stroke-width="1.5" fill="none"/>
<rect x="636.9" y="372.9" width="117.30000000000007" height="34.0" fill="url(#ybar)" stroke="#000" stroke-width="1.6"/>
<text x="681.3" y="190.0" font-size="17.5" text-anchor="middle" fill="#ddd" textLength="43.0" lengthAdjust="spacingAndGlyphs">DeltaL</text>
<text x="695.4" y="569.0" font-size="17.5" text-anchor="middle" fill="#ddd" textLength="38.0" lengthAdjust="spacingAndGlyphs">100%</text>
<rect x="823.7" y="197.5" width="149.29999999999995" height="351.29999999999995" fill="#252525"/>
<rect x="823.7" y="195.2" width="149.29999999999995" height="4" fill="#808080"/>
<path d="M818.2 197.5H823.7" stroke="#ddd" stroke-width="1.5"/>
<text x="817.7" y="203.8" font-size="17.5" text-anchor="end" fill="#ddd" textLength="16.5" lengthAdjust="spacingAndGlyphs">15</text>
<path d="M823.7 256.2H973" stroke="#8c8c8c" stroke-width="1.4"/>
<path d="M818.2 256.2H823.7" stroke="#ddd" stroke-width="1.5"/>
<text x="817.7" y="262.5" font-size="17.5" text-anchor="end" fill="#ddd" textLength="16.5" lengthAdjust="spacingAndGlyphs">10</text>
<path d="M823.7 315.0H973" stroke="#8c8c8c" stroke-width="1.4"/>
<path d="M818.2 315.0H823.7" stroke="#ddd" stroke-width="1.5"/>
<text x="817.7" y="321.3" font-size="17.5" text-anchor="end" fill="#ddd" textLength="8.3" lengthAdjust="spacingAndGlyphs">5</text>
<path d="M823.7 374.2H973" stroke="#8c8c8c" stroke-width="1.4"/>
<path d="M818.2 374.2H823.7" stroke="#ddd" stroke-width="1.5"/>
<text x="817.7" y="380.5" font-size="17.5" text-anchor="end" fill="#ddd" textLength="8.3" lengthAdjust="spacingAndGlyphs">0</text>
<path d="M823.7 432.0H973" stroke="#8c8c8c" stroke-width="1.4"/>
<path d="M818.2 432.0H823.7" stroke="#ddd" stroke-width="1.5"/>
<text x="817.7" y="438.3" font-size="17.5" text-anchor="end" fill="#ddd" textLength="13.2" lengthAdjust="spacingAndGlyphs">-5</text>
<path d="M823.7 491.3H973" stroke="#8c8c8c" stroke-width="1.4"/>
<path d="M818.2 491.3H823.7" stroke="#ddd" stroke-width="1.5"/>
<text x="817.7" y="497.6" font-size="17.5" text-anchor="end" fill="#ddd" textLength="21.5" lengthAdjust="spacingAndGlyphs">-10</text>
<path d="M823.7 548.8H973" stroke="#8c8c8c" stroke-width="1.4"/>
<path d="M818.2 548.8H823.7" stroke="#ddd" stroke-width="1.5"/>
<text x="817.7" y="555.1" font-size="17.5" text-anchor="end" fill="#ddd" textLength="21.5" lengthAdjust="spacingAndGlyphs">-15</text>
<path d="M823.7 195.5V555.8M973 195.5V555.8" stroke="#999" stroke-width="1.5" fill="none"/>
<rect x="839.8" y="332.4" width="117.40000000000009" height="40.5" fill="url(#ybar)" stroke="#000" stroke-width="1.6"/>
<text x="884.7" y="190.0" font-size="17.5" text-anchor="middle" fill="#ddd" textLength="45.5" lengthAdjust="spacingAndGlyphs">DeltaC</text>
<text x="898.6" y="569.0" font-size="17.5" text-anchor="middle" fill="#ddd" textLength="38.0" lengthAdjust="spacingAndGlyphs">100%</text>
<rect x="1027.6" y="197.5" width="148.60000000000014" height="351.29999999999995" fill="#252525"/>
<rect x="1027.6" y="195.2" width="148.60000000000014" height="4" fill="#808080"/>
<path d="M1022.0999999999999 197.5H1027.6" stroke="#ddd" stroke-width="1.5"/>
<text x="1021.6" y="203.8" font-size="17.5" text-anchor="end" fill="#ddd" textLength="16.5" lengthAdjust="spacingAndGlyphs">15</text>
<path d="M1027.6 256.2H1176.2" stroke="#8c8c8c" stroke-width="1.4"/>
<path d="M1022.0999999999999 256.2H1027.6" stroke="#ddd" stroke-width="1.5"/>
<text x="1021.6" y="262.5" font-size="17.5" text-anchor="end" fill="#ddd" textLength="16.5" lengthAdjust="spacingAndGlyphs">10</text>
<path d="M1027.6 315.0H1176.2" stroke="#8c8c8c" stroke-width="1.4"/>
<path d="M1022.0999999999999 315.0H1027.6" stroke="#ddd" stroke-width="1.5"/>
<text x="1021.6" y="321.3" font-size="17.5" text-anchor="end" fill="#ddd" textLength="8.3" lengthAdjust="spacingAndGlyphs">5</text>
<path d="M1027.6 374.2H1176.2" stroke="#8c8c8c" stroke-width="1.4"/>
<path d="M1022.0999999999999 374.2H1027.6" stroke="#ddd" stroke-width="1.5"/>
<text x="1021.6" y="380.5" font-size="17.5" text-anchor="end" fill="#ddd" textLength="8.3" lengthAdjust="spacingAndGlyphs">0</text>
<path d="M1027.6 432.0H1176.2" stroke="#8c8c8c" stroke-width="1.4"/>
<path d="M1022.0999999999999 432.0H1027.6" stroke="#ddd" stroke-width="1.5"/>
<text x="1021.6" y="438.3" font-size="17.5" text-anchor="end" fill="#ddd" textLength="13.2" lengthAdjust="spacingAndGlyphs">-5</text>
<path d="M1027.6 491.3H1176.2" stroke="#8c8c8c" stroke-width="1.4"/>
<path d="M1022.0999999999999 491.3H1027.6" stroke="#ddd" stroke-width="1.5"/>
<text x="1021.6" y="497.6" font-size="17.5" text-anchor="end" fill="#ddd" textLength="21.5" lengthAdjust="spacingAndGlyphs">-10</text>
<path d="M1027.6 548.8H1176.2" stroke="#8c8c8c" stroke-width="1.4"/>
<path d="M1022.0999999999999 548.8H1027.6" stroke="#ddd" stroke-width="1.5"/>
<text x="1021.6" y="555.1" font-size="17.5" text-anchor="end" fill="#ddd" textLength="21.5" lengthAdjust="spacingAndGlyphs">-15</text>
<path d="M1027.6 195.5V555.8M1176.2 195.5V555.8" stroke="#999" stroke-width="1.5" fill="none"/>
<rect x="1043.7" y="372.9" width="116.70000000000005" height="84.5" fill="url(#ybar)" stroke="#000" stroke-width="1.6"/>
<text x="1087.8" y="190.0" font-size="17.5" text-anchor="middle" fill="#ddd" textLength="45.5" lengthAdjust="spacingAndGlyphs">DeltaH</text>
<text x="1102.0" y="569.0" font-size="17.5" text-anchor="middle" fill="#ddd" textLength="38.0" lengthAdjust="spacingAndGlyphs">100%</text>
<rect x="587" y="582" width="610" height="203" fill="#000"/>
<rect x="608.8" y="590.600" width="100.5" height="164.800" fill="rgb(193, 193, 165)" stroke="#fff" stroke-width="1.2"/>
<rect x="609.4" y="591.200" width="99.3" height="82" fill="rgb(196, 190, 164)"/>
<text x="659.2" y="774.5" font-size="14" text-anchor="middle" fill="#fff" textLength="23.3" lengthAdjust="spacingAndGlyphs">20%</text>
<rect x="727.6" y="590.600" width="101.8" height="164.800" fill="rgb(194, 192, 134)" stroke="#fff" stroke-width="1.2"/>
<rect x="728.2" y="591.200" width="100.6" height="82" fill="rgb(198, 186, 133)"/>
<text x="778.0" y="774.5" font-size="14" text-anchor="middle" fill="#fff" textLength="23.3" lengthAdjust="spacingAndGlyphs">40%</text>
<rect x="846.7" y="590.600" width="101.5" height="164.800" fill="rgb(194, 191, 106)" stroke="#fff" stroke-width="1.2"/>
<rect x="847.3" y="591.200" width="100.3" height="82" fill="rgb(197, 183, 107)"/>
<text x="897.1" y="774.5" font-size="14" text-anchor="middle" fill="#fff" textLength="23.3" lengthAdjust="spacingAndGlyphs">60%</text>
<rect x="966.8" y="590.600" width="100.5" height="164.800" fill="rgb(194, 191, 73)" stroke="#fff" stroke-width="1.2"/>
<rect x="967.4" y="591.200" width="99.3" height="82" fill="rgb(198, 181, 77)"/>
<text x="1017.2" y="774.5" font-size="14" text-anchor="middle" fill="#fff" textLength="23.3" lengthAdjust="spacingAndGlyphs">80%</text>
<rect x="1085.6" y="590.600" width="100.5" height="164.800" fill="rgb(196, 193, 33)" stroke="#fff" stroke-width="1.2"/>
<rect x="1086.2" y="591.200" width="99.3" height="82" fill="rgb(200, 182, 0)"/>
<text x="1136.0" y="774.5" font-size="14" text-anchor="middle" fill="#fff" textLength="29.7" lengthAdjust="spacingAndGlyphs">100%</text>
<text transform="translate(600.200,626.500) rotate(-90)" font-size="14.500" fill="#fff" text-anchor="middle" textLength="44" lengthAdjust="spacingAndGlyphs">Actual</text>
<text transform="translate(600.200,719.500) rotate(-90)" font-size="14.500" fill="#fff" text-anchor="middle" textLength="43" lengthAdjust="spacingAndGlyphs">Target</text>
<text x="252.5" y="841.6" font-size="37" fill="#eee" textLength="50.6" lengthAdjust="spacingAndGlyphs" stroke="#eee" stroke-width="0.45">Avg</text>
<text x="310.4" y="841.6" font-size="37" fill="#eee" textLength="115.5" lengthAdjust="spacingAndGlyphs" stroke="#eee" stroke-width="0.45">dE2000:</text>
<text x="431.8" y="841.6" font-size="37" fill="#eee" textLength="61.5" lengthAdjust="spacingAndGlyphs" stroke="#eee" stroke-width="0.45">6.08</text>
<text x="246.5" y="892.8" font-size="37" fill="#eee" textLength="60.3" lengthAdjust="spacingAndGlyphs" stroke="#eee" stroke-width="0.45">Max</text>
<text x="315.4" y="892.8" font-size="37" fill="#eee" textLength="115.2" lengthAdjust="spacingAndGlyphs" stroke="#eee" stroke-width="0.45">dE2000:</text>
<text x="437.7" y="892.8" font-size="37" fill="#eee" textLength="60.8" lengthAdjust="spacingAndGlyphs" stroke="#eee" stroke-width="0.45">15.8</text>
<text x="214.3" y="951.5" font-size="37.5" fill="#eee" textLength="105.8" lengthAdjust="spacingAndGlyphs" stroke="#eee" stroke-width="0.45">Current</text>
<text x="328.9" y="951.5" font-size="37.5" fill="#eee" textLength="113.0" lengthAdjust="spacingAndGlyphs" stroke="#eee" stroke-width="0.45">Reading</text>
<text x="215.6" y="997.3" font-size="31" fill="#eee" textLength="20.4" lengthAdjust="spacingAndGlyphs" stroke="#eee" stroke-width="0.45">x:</text>
<text x="241.3" y="997.3" font-size="31" fill="#eee" textLength="79.8" lengthAdjust="spacingAndGlyphs" stroke="#eee" stroke-width="0.45">0.4375</text>
<text x="377.2" y="997.3" font-size="31" fill="#eee" textLength="20.1" lengthAdjust="spacingAndGlyphs" stroke="#eee" stroke-width="0.45">y:</text>
<text x="403.5" y="997.3" font-size="31" fill="#eee" textLength="79.4" lengthAdjust="spacingAndGlyphs" stroke="#eee" stroke-width="0.45">0.5004</text>
<text x="215.6" y="1047.2" font-size="31" fill="#eee" textLength="28.8" lengthAdjust="spacingAndGlyphs" stroke="#eee" stroke-width="0.45">fL:</text>
<text x="250.1" y="1047.2" font-size="31" fill="#eee" textLength="65.8" lengthAdjust="spacingAndGlyphs" stroke="#eee" stroke-width="0.45">34.76</text>
<text x="214.7" y="1089.4" font-size="31" fill="#eee" textLength="80.0" lengthAdjust="spacingAndGlyphs" stroke="#eee" stroke-width="0.45">cd/m²:</text>
<text x="300.1" y="1089.4" font-size="31" fill="#eee" textLength="80.1" lengthAdjust="spacingAndGlyphs" stroke="#eee" stroke-width="0.45">119.11</text>
<rect x="564.5" y="850" width="261.0" height="225" fill="#262626"/>
<path d="M559.5 889H825.5" stroke="#999" stroke-width="1.3"/>
<text x="559.0" y="895.3" font-size="17.5" text-anchor="end" fill="#ddd" textLength="16.5" lengthAdjust="spacingAndGlyphs">20</text>
<path d="M559.5 964.2H825.5" stroke="#999" stroke-width="1.3"/>
<text x="559.0" y="970.5" font-size="17.5" text-anchor="end" fill="#ddd" textLength="8.3" lengthAdjust="spacingAndGlyphs">0</text>
<path d="M559.5 1038.3H825.5" stroke="#999" stroke-width="1.3"/>
<text x="559.0" y="1046.9" font-size="17.5" text-anchor="end" fill="#ddd" textLength="21.5" lengthAdjust="spacingAndGlyphs">-20</text>
<path d="M564.5 850H825.5V1083M564.5 850V1083M564.5 1075H825.5" stroke="#999" stroke-width="1.3" fill="none"/>
<rect x="592" y="948.500" width="68" height="15.700" fill="url(#rbar)" stroke="#000" stroke-width="1.3"/>
<rect x="661.500" y="964.200" width="69" height="46" fill="url(#gbar)" stroke="#000" stroke-width="1.3"/>
<rect x="731.500" y="964.200" width="69.500" height="107" fill="url(#bbar)" stroke="#000" stroke-width="1.3"/>
<text x="681.0" y="844.0" font-size="17" text-anchor="middle" fill="#ddd" textLength="85.5" lengthAdjust="spacingAndGlyphs">RGB Balance</text>
<text x="695.0" y="1096.0" font-size="17" text-anchor="middle" fill="#ddd" textLength="36.1" lengthAdjust="spacingAndGlyphs">100%</text>
<rect x="200" y="1106" width="1720" height="64" fill="url(#botg)"/>
<rect x="201" y="1108" width="45" height="62" rx="3" fill="url(#swb)"/><rect x="206" y="1134" width="35" height="30" fill="#ff0" rx="1"/>
<circle cx="223.500" cy="1116" r="6.500" fill="#666"/><path d="M219.500 1118h8l-4-5z" fill="#222"/>
<rect x="252" y="1108" width="150" height="62" rx="4" fill="url(#swb)"/>
<rect x="258" y="1114" width="139" height="34" rx="3" fill="rgb(191, 191, 165)"/>
<text x="327" y="1163.500" font-size="10" font-weight="bold" fill="#2c2c2c" text-anchor="middle">20%</text>
<rect x="404" y="1108" width="150" height="62" rx="4" fill="url(#swb)"/>
<rect x="410" y="1114" width="139" height="34" rx="3" fill="rgb(193, 193, 132)"/>
<text x="479" y="1163.500" font-size="10" font-weight="bold" fill="#2c2c2c" text-anchor="middle">40%</text>
<rect x="556" y="1108" width="150" height="62" rx="4" fill="url(#swb)"/>
<rect x="562" y="1114" width="139" height="34" rx="3" fill="rgb(193, 191, 106)"/>
<text x="631" y="1163.500" font-size="10" font-weight="bold" fill="#2c2c2c" text-anchor="middle">60%</text>
<rect x="708" y="1108" width="150" height="62" rx="4" fill="url(#swb)"/>
<rect x="714" y="1114" width="139" height="34" rx="3" fill="rgb(191, 189, 72)"/>
<text x="783" y="1163.500" font-size="10" font-weight="bold" fill="#2c2c2c" text-anchor="middle">80%</text>
<rect x="860" y="1108" width="150" height="62" rx="4" fill="#1a1a1a"/>
<rect x="865" y="1113" width="141" height="35" rx="3" fill="rgb(197, 195, 0)"/>
<text x="935" y="1163.500" font-size="10" font-weight="bold" fill="#fff" text-anchor="middle">100%</text>
<linearGradient id="navg" x1="0" x2="0" y1="0" y2="1"><stop offset="0" stop-color="#b4b4b4"/><stop offset="0.5" stop-color="#909090"/><stop offset="1" stop-color="#6c6c6c"/></linearGradient>
<linearGradient id="navg2" x1="0" x2="0" y1="0" y2="1"><stop offset="0" stop-color="#555"/><stop offset="1" stop-color="#8a8a8a"/></linearGradient>
<rect x="1646.0" y="1108" width="44.300" height="29.500" rx="3" fill="url(#navg2)"/><circle cx="1668.0" cy="1124" r="9" fill="#555"/>
<rect x="1691.3" y="1108" width="44.300" height="29.500" rx="3" fill="url(#navg2)"/><circle cx="1713.3" cy="1124" r="9" fill="#555"/>
<rect x="1736.6" y="1108" width="44.300" height="29.500" rx="3" fill="url(#navg2)"/><circle cx="1758.6" cy="1124" r="9" fill="#555"/>
<rect x="1781.9" y="1108" width="44.300" height="29.500" rx="3" fill="url(#navg2)"/><circle cx="1803.9" cy="1124" r="9" fill="#555"/>
<rect x="1827.2" y="1108" width="44.300" height="29.500" rx="3" fill="url(#navg2)"/><circle cx="1849.2" cy="1124" r="9" fill="#555"/>
<circle cx="1896" cy="1124" r="9" fill="#3c3c3c"/>
<rect x="1646" y="1139.500" width="272" height="29" rx="3" fill="url(#navg)"/><path d="M1782.500 1139.500v29" stroke="#555" stroke-width="1.2"/>
<text x="1728" y="1163" font-size="24" fill="#2c2c2c" text-anchor="middle" font-family="DejaVu Sans, Liberation Sans, sans-serif" textLength="50" lengthAdjust="spacingAndGlyphs" stroke="#2c2c2c" stroke-width="0.4">Back</text>
<text x="1836" y="1163" font-size="24" fill="#2c2c2c" text-anchor="middle" font-family="DejaVu Sans, Liberation Sans, sans-serif" textLength="51" lengthAdjust="spacingAndGlyphs" stroke="#2c2c2c" stroke-width="0.4">Next</text>
<circle cx="1676.700" cy="1153.500" r="9.500" fill="#808080"/><text x="1676.700" y="1158.500" font-size="16" fill="#2c2c2c" text-anchor="middle" font-family="DejaVu Sans, Liberation Sans, sans-serif">«</text>
<circle cx="1890.400" cy="1153.500" r="9.500" fill="#808080"/><text x="1890.400" y="1158.500" font-size="16" fill="#2c2c2c" text-anchor="middle" font-family="DejaVu Sans, Liberation Sans, sans-serif">»</text>
<rect x="1597.500" y="1128" width="47" height="41" rx="3" fill="url(#navg)"/><rect x="1606" y="1134.500" width="30" height="27" rx="4" fill="#8c8c8c" stroke="#2a2a2a" stroke-width="2"/><rect x="1614.300" y="1141.300" width="13.200" height="13.200" fill="#000"/>
<g opacity="0.85"><path d="M1586.600 1129.600L1584.800 1097.900L1536.700 1089.800L1538.500 1136.500L1568 1152.900L1622.700 1135.800L1591.700 1130.300" fill="none" stroke="#ddd" stroke-opacity="0.7" stroke-width="5.500" stroke-linejoin="miter"/><path d="M1586.600 1129.600L1584.800 1097.900L1536.700 1089.800L1538.500 1136.500L1568 1152.900L1622.700 1135.800L1591.700 1130.300" fill="none" stroke="#9c2a30" stroke-width="3.600"/>
<path d="M1586.600 1129.600L1546.900 1132.200" stroke="#ddd" stroke-opacity="0.7" stroke-width="3.500"/><path d="M1586.600 1129.600L1546.900 1132.200" stroke="#9c2a30" stroke-width="1.800"/>
<path d="M1549.100 1104.800L1556.400 1101.500L1566.600 1112.100L1590.600 1086.200L1593.600 1087.300L1564.400 1126Z" fill="#3c3c3c" stroke="#ddd" stroke-opacity="0.8" stroke-width="1"/>
<text x="1596" y="1125.800" font-size="36" font-weight="bold" textLength="192.700" lengthAdjust="spacingAndGlyphs" fill="#9a2a32" stroke="#e6e6e6" stroke-opacity="0.75" stroke-width="2" paint-order="stroke">NOTEBOOK</text>
<text x="1791" y="1125.800" font-size="36" font-weight="bold" textLength="118.500" lengthAdjust="spacingAndGlyphs" fill="#262626" stroke="#e6e6e6" stroke-opacity="0.75" stroke-width="2" paint-order="stroke">CHECK</text></g>
<rect x="1204" y="106" width="716" height="697" fill="#1e1e1e"/>
<rect x="1210.500" y="115" width="700.500" height="679" fill="#303030"/>
<rect x="1249.4" y="144" width="659.0" height="613.9" fill="#252525"/>
<clipPath id="plotclip"><rect x="1249.4" y="144" width="659.0" height="613.9"/></clipPath>
<clipPath id="locus"><path d="M1530.9 740.9 L1530.8 741.0 L1530.8 741.0 L1530.8 741.0 L1530.7 741.0 L1530.7 741.1 L1530.6 741.1 L1530.6 741.2 L1530.5 741.2 L1530.5 741.3 L1530.4 741.3 L1530.3 741.3 L1530.3 741.4 L1530.2 741.4 L1530.1 741.5 L1530.0 741.5 L1529.9 741.5 L1529.8 741.6 L1529.7 741.6 L1529.6 741.6 L1529.5 741.6 L1529.4 741.6 L1529.3 741.6 L1529.1 741.6 L1529.0 741.6 L1528.8 741.6 L1528.7 741.6 L1528.5 741.6 L1528.4 741.6 L1528.2 741.6 L1528.0 741.6 L1527.8 741.6 L1527.6 741.5 L1527.3 741.4 L1527.1 741.3 L1526.7 741.2 L1526.4 741.0 L1526.0 740.7 L1525.5 740.4 L1525.0 740.1 L1524.5 739.6 L1523.8 739.1 L1523.2 738.5 L1522.4 737.9 L1521.6 737.1 L1520.8 736.3 L1519.8 735.4 L1518.9 734.5 L1517.8 733.5 L1516.7 732.3 L1515.5 731.1 L1514.2 729.9 L1512.9 728.5 L1511.5 727.0 L1510.0 725.5 L1508.4 723.9 L1506.7 722.2 L1505.0 720.4 L1503.1 718.6 L1501.2 716.6 L1499.1 714.6 L1496.9 712.4 L1494.7 710.2 L1492.3 707.8 L1489.9 705.4 L1487.3 702.8 L1484.6 700.1 L1481.8 697.3 L1478.8 694.4 L1475.8 691.2 L1472.6 687.9 L1469.2 684.4 L1465.7 680.6 L1462.0 676.6 L1458.1 672.3 L1454.1 667.6 L1449.9 662.7 L1445.5 657.3 L1440.9 651.5 L1436.0 645.2 L1430.9 638.4 L1425.6 631.0 L1420.0 622.9 L1414.1 614.0 L1407.9 604.5 L1401.4 594.1 L1394.7 582.9 L1387.7 571.0 L1380.5 558.5 L1373.2 545.3 L1365.8 531.6 L1358.4 517.4 L1350.9 502.7 L1343.4 487.7 L1336.0 472.3 L1328.7 456.6 L1321.6 440.8 L1314.7 424.9 L1307.9 409.1 L1301.5 393.4 L1295.4 377.9 L1289.6 362.8 L1284.2 348.1 L1279.2 333.9 L1274.7 320.3 L1270.7 307.4 L1267.0 295.0 L1263.8 283.3 L1261.0 272.2 L1258.5 261.8 L1256.5 252.0 L1254.7 242.8 L1253.4 234.3 L1252.3 226.4 L1251.5 219.2 L1251.1 212.5 L1250.9 206.5 L1251.0 200.9 L1251.3 195.8 L1251.9 191.1 L1252.8 186.9 L1253.9 183.1 L1255.2 179.5 L1256.8 176.4 L1258.5 173.5 L1260.4 170.9 L1262.5 168.6 L1264.8 166.6 L1267.2 164.8 L1269.8 163.3 L1272.5 162.0 L1275.3 160.9 L1278.2 160.0 L1281.2 159.4 L1284.2 158.8 L1287.4 158.5 L1290.6 158.2 L1293.8 158.0 L1297.1 157.9 L1300.4 157.9 L1303.7 157.9 L1307.1 158.0 L1310.4 158.0 L1313.7 158.1 L1317.1 158.2 L1320.5 158.3 L1323.9 158.4 L1327.4 158.6 L1330.9 158.8 L1334.4 159.0 L1338.0 159.2 L1341.7 159.5 L1345.4 159.8 L1349.2 160.2 L1353.1 160.6 L1357.0 161.0 L1361.1 161.4 L1365.2 161.8 L1369.3 162.3 L1373.6 162.8 L1377.9 163.3 L1382.4 163.9 L1386.9 164.4 L1391.5 165.0 L1396.3 165.6 L1401.1 166.2 L1406.0 166.9 L1411.1 167.5 L1416.2 168.2 L1421.5 168.9 L1426.9 169.6 L1432.4 170.4 L1438.0 171.1 L1443.8 171.9 L1449.7 172.7 L1455.7 173.5 L1461.8 174.4 L1468.1 175.3 L1474.5 176.1 L1481.0 177.0 L1487.6 178.0 L1494.4 178.9 L1501.3 179.9 L1508.4 180.9 L1515.5 181.9 L1522.9 182.9 L1530.3 183.9 L1537.9 185.0 L1545.6 186.1 L1553.4 187.1 L1561.4 188.3 L1569.5 189.4 L1577.6 190.5 L1585.8 191.7 L1594.1 192.8 L1602.5 194.0 L1610.9 195.1 L1619.4 196.3 L1627.8 197.5 L1636.3 198.7 L1644.8 199.9 L1653.3 201.1 L1661.8 202.3 L1670.2 203.4 L1678.6 204.6 L1686.9 205.8 L1695.2 206.9 L1703.4 208.1 L1711.5 209.2 L1719.5 210.3 L1727.3 211.4 L1735.0 212.5 L1742.6 213.5 L1750.0 214.5 L1757.2 215.5 L1764.3 216.5 L1771.1 217.5 L1777.7 218.4 L1784.1 219.3 L1790.3 220.2 L1796.3 221.0 L1802.1 221.8 L1807.7 222.6 L1813.1 223.4 L1818.3 224.1 L1823.3 224.8 L1828.1 225.5 L1832.7 226.1 L1837.2 226.7 L1841.5 227.3 L1845.6 227.9 L1849.6 228.4 L1853.4 229.0 L1857.2 229.5 L1860.8 230.0 L1864.3 230.5 L1867.7 231.0 L1871.1 231.4 L1874.3 231.9 L1877.4 232.3 L1880.3 232.7 L1883.2 233.1 L1885.9 233.5 L1888.6 233.9 L1891.1 234.2 L1893.4 234.6 L1895.7 234.9 L1897.9 235.2 L1899.9 235.4 L1901.8 235.7 L1903.7 236.0 L1905.4 236.2 L1907.1 236.4 L1908.7 236.7 L1910.2 236.9 L1911.6 237.1 L1912.9 237.2 L1914.1 237.4 L1915.3 237.6 L1916.4 237.7 L1917.4 237.9 L1918.4 238.0 L1919.2 238.1 L1920.0 238.3 L1920.8 238.4 L1921.5 238.4 L1922.1 238.5 L1922.7 238.6 L1923.2 238.7 L1923.7 238.8 L1924.2 238.8 L1924.7 238.9 L1925.2 239.0 L1925.7 239.0 L1926.1 239.1 L1926.6 239.2 L1927.0 239.2 L1927.5 239.3 L1927.9 239.3 L1928.3 239.4 L1928.7 239.5 L1929.1 239.5 L1929.4 239.6 L1929.8 239.6 L1930.1 239.7 L1930.5 239.7 L1930.8 239.8 L1931.1 239.8 L1931.4 239.8 L1931.6 239.9 L1931.8 239.9 L1932.0 239.9 L1932.2 240.0 L1932.4 240.0 L1932.5 240.0 L1932.6 240.0 L1932.6 240.0 L1932.7 240.0 L1932.7 240.0 L1932.6 240.0Z"/></clipPath>
<filter id="vblur" x="-2%" y="-2%" width="104%" height="104%" color-interpolation-filters="sRGB"><feGaussianBlur stdDeviation="0 2"/></filter>
<g clip-path="url(#plotclip)"><g clip-path="url(#locus)"><g filter="url(#vblur)">
<linearGradient id="c0"><stop offset="0.000" stop-color="#00ff00"/><stop offset="1.000" stop-color="#00ff00"/></linearGradient><rect x="1281" y="149" width="56" height="4.5" fill="url(#c0)"/>
<linearGradient id="c1"><stop offset="0.000" stop-color="#00ff00"/><stop offset="1.000" stop-color="#00ff00"/></linearGradient><rect x="1268" y="153" width="110" height="4.5" fill="url(#c1)"/>
<linearGradient id="c2"><stop offset="0.000" stop-color="#00ff00"/><stop offset="0.824" stop-color="#02ff00"/><stop offset="1.000" stop-color="#3dff00"/></linearGradient><rect x="1262" y="157" width="148" height="4.5" fill="url(#c2)"/>
<linearGradient id="c3"><stop offset="0.000" stop-color="#00ff00"/><stop offset="0.698" stop-color="#03ff00"/><stop offset="0.934" stop-color="#6bff00"/><stop offset="1.000" stop-color="#8dff00"/></linearGradient><rect x="1258" y="161" width="182" height="4.5" fill="url(#c3)"/>
<linearGradient id="c4"><stop offset="0.000" stop-color="#00ff00"/><stop offset="0.607" stop-color="#02ff00"/><stop offset="0.808" stop-color="#6bff00"/><stop offset="0.977" stop-color="#d9ff00"/><stop offset="1.000" stop-color="#eaff00"/></linearGradient><rect x="1255" y="165" width="214" height="4.5" fill="url(#c4)"/>
<linearGradient id="c5"><stop offset="0.000" stop-color="#00ff04"/><stop offset="0.402" stop-color="#00ff00"/><stop offset="0.545" stop-color="#03ff00"/><stop offset="0.717" stop-color="#6bff00"/><stop offset="0.865" stop-color="#daff00"/><stop offset="0.910" stop-color="#fffd00"/><stop offset="0.992" stop-color="#ffc200"/><stop offset="1.000" stop-color="#ffbd00"/></linearGradient><rect x="1253" y="169" width="244" height="4.5" fill="url(#c5)"/>
<linearGradient id="c6"><stop offset="0.000" stop-color="#00ff0a"/><stop offset="0.353" stop-color="#00ff00"/><stop offset="0.491" stop-color="#01ff00"/><stop offset="0.644" stop-color="#6aff00"/><stop offset="0.775" stop-color="#daff00"/><stop offset="0.815" stop-color="#fffc00"/><stop offset="0.887" stop-color="#ffc100"/><stop offset="0.985" stop-color="#ff8c00"/><stop offset="1.000" stop-color="#ff8600"/></linearGradient><rect x="1251" y="173" width="275" height="4.5" fill="url(#c6)"/>
<linearGradient id="c7"><stop offset="0.000" stop-color="#00ff0f"/><stop offset="0.423" stop-color="#00ff00"/><stop offset="0.449" stop-color="#02ff00"/><stop offset="0.584" stop-color="#6aff00"/><stop offset="0.698" stop-color="#d7ff00"/><stop offset="0.734" stop-color="#ffff00"/><stop offset="0.797" stop-color="#ffc500"/><stop offset="0.882" stop-color="#ff9000"/><stop offset="1.000" stop-color="#ff6200"/></linearGradient><rect x="1250" y="177" width="305" height="4.5" fill="url(#c7)"/>
<linearGradient id="c8"><stop offset="0.000" stop-color="#00ff14"/><stop offset="0.412" stop-color="#01ff00"/><stop offset="0.534" stop-color="#6aff00"/><stop offset="0.639" stop-color="#d8ff00"/><stop offset="0.672" stop-color="#fffe00"/><stop offset="0.728" stop-color="#ffc300"/><stop offset="0.806" stop-color="#ff8f00"/><stop offset="0.916" stop-color="#ff5f00"/><stop offset="1.000" stop-color="#ff4700"/></linearGradient><rect x="1249" y="181" width="335" height="4.5" fill="url(#c8)"/>
<linearGradient id="c9"><stop offset="0.000" stop-color="#00ff1a"/><stop offset="0.383" stop-color="#02ff07"/><stop offset="0.496" stop-color="#6cff00"/><stop offset="0.590" stop-color="#d9ff00"/><stop offset="0.620" stop-color="#fffd00"/><stop offset="0.672" stop-color="#ffc200"/><stop offset="0.744" stop-color="#ff8d00"/><stop offset="0.846" stop-color="#ff5e00"/><stop offset="1.000" stop-color="#ff3500"/></linearGradient><rect x="1249" y="185" width="363" height="4.5" fill="url(#c9)"/>
<linearGradient id="c10"><stop offset="0.000" stop-color="#00ff1f"/><stop offset="0.355" stop-color="#01ff0e"/><stop offset="0.457" stop-color="#69ff07"/><stop offset="0.543" stop-color="#d6ff00"/><stop offset="0.571" stop-color="#ffff00"/><stop offset="0.620" stop-color="#ffc300"/><stop offset="0.686" stop-color="#ff8e00"/><stop offset="0.781" stop-color="#ff5e00"/><stop offset="0.921" stop-color="#ff3500"/><stop offset="1.000" stop-color="#ff2500"/></linearGradient><rect x="1249" y="189" width="392" height="4.5" fill="url(#c10)"/>
<linearGradient id="c11"><stop offset="0.000" stop-color="#00ff25"/><stop offset="0.333" stop-color="#02ff16"/><stop offset="0.428" stop-color="#6bff0f"/><stop offset="0.508" stop-color="#daff08"/><stop offset="0.532" stop-color="#fffe06"/><stop offset="0.575" stop-color="#ffc501"/><stop offset="0.634" stop-color="#ff9000"/><stop offset="0.720" stop-color="#ff6000"/><stop offset="0.848" stop-color="#ff3600"/><stop offset="1.000" stop-color="#ff1900"/></linearGradient><rect x="1249" y="193" width="421" height="4.5" fill="url(#c11)"/>
<linearGradient id="c12"><stop offset="0.000" stop-color="#00ff2a"/><stop offset="0.312" stop-color="#01ff1d"/><stop offset="0.401" stop-color="#6bff17"/><stop offset="0.474" stop-color="#d8ff11"/><stop offset="0.499" stop-color="#fffd0f"/><stop offset="0.539" stop-color="#ffc308"/><stop offset="0.595" stop-color="#ff8f02"/><stop offset="0.675" stop-color="#ff5f00"/><stop offset="0.795" stop-color="#ff3500"/><stop offset="0.987" stop-color="#ff1100"/><stop offset="1.000" stop-color="#ff0f00"/></linearGradient><rect x="1249" y="197" width="449" height="4.5" fill="url(#c12)"/>
<linearGradient id="c13"><stop offset="0.000" stop-color="#00ff30"/><stop offset="0.295" stop-color="#02ff24"/><stop offset="0.377" stop-color="#6bff20"/><stop offset="0.446" stop-color="#d8ff1b"/><stop offset="0.467" stop-color="#ffff19"/><stop offset="0.506" stop-color="#ffc210"/><stop offset="0.559" stop-color="#ff8d09"/><stop offset="0.634" stop-color="#ff5e02"/><stop offset="0.747" stop-color="#ff3400"/><stop offset="0.927" stop-color="#ff1000"/><stop offset="1.000" stop-color="#ff0700"/></linearGradient><rect x="1249" y="201" width="478" height="4.5" fill="url(#c13)"/>
<linearGradient id="c14"><stop offset="0.000" stop-color="#00ff35"/><stop offset="0.278" stop-color="#01ff2c"/><stop offset="0.355" stop-color="#6aff28"/><stop offset="0.420" stop-color="#d9ff24"/><stop offset="0.440" stop-color="#fffe23"/><stop offset="0.475" stop-color="#ffc318"/><stop offset="0.525" stop-color="#ff8e0f"/><stop offset="0.594" stop-color="#ff5f07"/><stop offset="0.698" stop-color="#ff3500"/><stop offset="0.864" stop-color="#ff1100"/><stop offset="1.000" stop-color="#ff0000"/></linearGradient><rect x="1249" y="205" width="507" height="4.5" fill="url(#c14)"/>
<linearGradient id="c15"><stop offset="0.000" stop-color="#00ff3b"/><stop offset="0.265" stop-color="#02ff34"/><stop offset="0.336" stop-color="#6aff31"/><stop offset="0.396" stop-color="#d6ff2e"/><stop offset="0.416" stop-color="#fffd2c"/><stop offset="0.450" stop-color="#ffc220"/><stop offset="0.496" stop-color="#ff8c15"/><stop offset="0.562" stop-color="#ff5e0c"/><stop offset="0.660" stop-color="#ff3403"/><stop offset="0.817" stop-color="#ff1000"/><stop offset="0.968" stop-color="#ff0000"/><stop offset="1.000" stop-color="#ff0000"/></linearGradient><rect x="1249" y="209" width="536" height="4.5" fill="url(#c15)"/>
<linearGradient id="c16"><stop offset="0.000" stop-color="#00ff41"/><stop offset="0.252" stop-color="#01ff3c"/><stop offset="0.319" stop-color="#69ff3a"/><stop offset="0.376" stop-color="#d7ff38"/><stop offset="0.395" stop-color="#fffc36"/><stop offset="0.427" stop-color="#ffc128"/><stop offset="0.470" stop-color="#ff8d1c"/><stop offset="0.532" stop-color="#ff5d11"/><stop offset="0.624" stop-color="#ff3407"/><stop offset="0.771" stop-color="#ff1100"/><stop offset="0.913" stop-color="#ff0000"/><stop offset="1.000" stop-color="#ff0000"/></linearGradient><rect x="1249" y="213" width="564" height="4.5" fill="url(#c16)"/>
<linearGradient id="c17"><stop offset="0.000" stop-color="#00ff47"/><stop offset="0.241" stop-color="#02ff44"/><stop offset="0.304" stop-color="#69ff43"/><stop offset="0.358" stop-color="#d8ff42"/><stop offset="0.374" stop-color="#fffe41"/><stop offset="0.403" stop-color="#ffc532"/><stop offset="0.444" stop-color="#ff8f24"/><stop offset="0.501" stop-color="#ff5f17"/><stop offset="0.587" stop-color="#ff360c"/><stop offset="0.723" stop-color="#ff1202"/><stop offset="0.862" stop-color="#ff0000"/><stop offset="1.000" stop-color="#ff0000"/></linearGradient><rect x="1249" y="217" width="593" height="4.5" fill="url(#c17)"/>
<linearGradient id="c18"><stop offset="0.000" stop-color="#00ff4d"/><stop offset="0.230" stop-color="#01ff4c"/><stop offset="0.290" stop-color="#69ff4c"/><stop offset="0.341" stop-color="#d8ff4c"/><stop offset="0.357" stop-color="#fffd4c"/><stop offset="0.385" stop-color="#ffc33a"/><stop offset="0.424" stop-color="#ff8e2a"/><stop offset="0.478" stop-color="#ff5e1c"/><stop offset="0.560" stop-color="#ff3510"/><stop offset="0.691" stop-color="#ff1105"/><stop offset="0.818" stop-color="#ff0000"/><stop offset="1.000" stop-color="#ff0000"/></linearGradient><rect x="1249" y="221" width="621" height="4.5" fill="url(#c18)"/>
<linearGradient id="c19"><stop offset="0.000" stop-color="#00ff53"/><stop offset="0.222" stop-color="#02ff55"/><stop offset="0.278" stop-color="#6bff56"/><stop offset="0.326" stop-color="#d9ff57"/><stop offset="0.342" stop-color="#fffc56"/><stop offset="0.368" stop-color="#ffc243"/><stop offset="0.405" stop-color="#ff8c31"/><stop offset="0.457" stop-color="#ff5d21"/><stop offset="0.535" stop-color="#ff3413"/><stop offset="0.660" stop-color="#ff1008"/><stop offset="0.777" stop-color="#ff0001"/><stop offset="1.000" stop-color="#ff0000"/></linearGradient><rect x="1249" y="225" width="650" height="4.5" fill="url(#c19)"/>
<linearGradient id="c20"><stop offset="0.000" stop-color="#00ff59"/><stop offset="0.220" stop-color="#03ff5e"/><stop offset="0.274" stop-color="#6bff60"/><stop offset="0.321" stop-color="#daff62"/><stop offset="0.335" stop-color="#ffff62"/><stop offset="0.361" stop-color="#ffc34d"/><stop offset="0.395" stop-color="#ff8f39"/><stop offset="0.445" stop-color="#ff5f28"/><stop offset="0.520" stop-color="#ff3619"/><stop offset="0.638" stop-color="#ff120b"/><stop offset="0.759" stop-color="#ff0004"/><stop offset="1.000" stop-color="#ff0000"/></linearGradient><rect x="1249" y="229" width="660" height="4.5" fill="url(#c20)"/>
<linearGradient id="c21"><stop offset="0.000" stop-color="#00ff5f"/><stop offset="0.219" stop-color="#02ff67"/><stop offset="0.273" stop-color="#6aff6a"/><stop offset="0.319" stop-color="#d7ff6d"/><stop offset="0.334" stop-color="#fffd6d"/><stop offset="0.360" stop-color="#ffc255"/><stop offset="0.395" stop-color="#ff8d40"/><stop offset="0.445" stop-color="#ff5e2d"/><stop offset="0.519" stop-color="#ff351d"/><stop offset="0.639" stop-color="#ff110e"/><stop offset="0.754" stop-color="#ff0006"/><stop offset="1.000" stop-color="#ff0000"/></linearGradient><rect x="1250" y="233" width="659" height="4.5" fill="url(#c21)"/>
<linearGradient id="c22"><stop offset="0.000" stop-color="#00ff65"/><stop offset="0.220" stop-color="#03ff70"/><stop offset="0.273" stop-color="#6aff74"/><stop offset="0.319" stop-color="#d8ff78"/><stop offset="0.334" stop-color="#fffc78"/><stop offset="0.360" stop-color="#ffc15e"/><stop offset="0.395" stop-color="#ff8c47"/><stop offset="0.445" stop-color="#ff5d33"/><stop offset="0.519" stop-color="#ff3421"/><stop offset="0.639" stop-color="#ff1011"/><stop offset="0.750" stop-color="#ff0009"/><stop offset="1.000" stop-color="#ff0000"/></linearGradient><rect x="1250" y="237" width="659" height="4.5" fill="url(#c22)"/>
<linearGradient id="c23"><stop offset="0.000" stop-color="#00ff6c"/><stop offset="0.219" stop-color="#01ff79"/><stop offset="0.272" stop-color="#6aff7e"/><stop offset="0.318" stop-color="#d9ff84"/><stop offset="0.331" stop-color="#ffff86"/><stop offset="0.356" stop-color="#ffc56a"/><stop offset="0.389" stop-color="#ff9051"/><stop offset="0.436" stop-color="#ff613b"/><stop offset="0.508" stop-color="#ff3727"/><stop offset="0.620" stop-color="#ff1316"/><stop offset="0.742" stop-color="#ff000c"/><stop offset="1.000" stop-color="#ff0000"/></linearGradient><rect x="1251" y="241" width="658" height="4.5" fill="url(#c23)"/>
<linearGradient id="c24"><stop offset="0.000" stop-color="#00ff72"/><stop offset="0.219" stop-color="#03ff83"/><stop offset="0.272" stop-color="#6dff89"/><stop offset="0.317" stop-color="#d9ff90"/><stop offset="0.330" stop-color="#fffe91"/><stop offset="0.355" stop-color="#ffc473"/><stop offset="0.388" stop-color="#ff8f58"/><stop offset="0.435" stop-color="#ff6040"/><stop offset="0.507" stop-color="#ff362b"/><stop offset="0.621" stop-color="#ff1219"/><stop offset="0.738" stop-color="#ff000e"/><stop offset="1.000" stop-color="#ff0002"/></linearGradient><rect x="1252" y="245" width="657" height="4.5" fill="url(#c24)"/>
<linearGradient id="c25"><stop offset="0.000" stop-color="#00ff79"/><stop offset="0.219" stop-color="#01ff8c"/><stop offset="0.271" stop-color="#69ff94"/><stop offset="0.315" stop-color="#d6ff9b"/><stop offset="0.330" stop-color="#fffc9d"/><stop offset="0.355" stop-color="#ffc27d"/><stop offset="0.388" stop-color="#ff8d60"/><stop offset="0.435" stop-color="#ff5e46"/><stop offset="0.507" stop-color="#ff352f"/><stop offset="0.621" stop-color="#ff111c"/><stop offset="0.734" stop-color="#ff0011"/><stop offset="1.000" stop-color="#ff0003"/></linearGradient><rect x="1252" y="249" width="657" height="4.5" fill="url(#c25)"/>
<linearGradient id="c26"><stop offset="0.000" stop-color="#00ff80"/><stop offset="0.220" stop-color="#03ff96"/><stop offset="0.271" stop-color="#6cff9f"/><stop offset="0.316" stop-color="#dbffa8"/><stop offset="0.328" stop-color="#ffffab"/><stop offset="0.352" stop-color="#ffc488"/><stop offset="0.386" stop-color="#ff8e69"/><stop offset="0.433" stop-color="#ff5e4d"/><stop offset="0.503" stop-color="#ff3534"/><stop offset="0.616" stop-color="#ff111f"/><stop offset="0.727" stop-color="#ff0014"/><stop offset="1.000" stop-color="#ff0005"/></linearGradient><rect x="1253" y="253" width="656" height="4.5" fill="url(#c26)"/>
<linearGradient id="c27"><stop offset="0.000" stop-color="#00ff86"/><stop offset="0.218" stop-color="#01ffa0"/><stop offset="0.269" stop-color="#68ffaa"/><stop offset="0.311" stop-color="#d4ffb4"/><stop offset="0.327" stop-color="#fffeb8"/><stop offset="0.350" stop-color="#ffc594"/><stop offset="0.382" stop-color="#ff9073"/><stop offset="0.427" stop-color="#ff6155"/><stop offset="0.496" stop-color="#ff373a"/><stop offset="0.605" stop-color="#ff1324"/><stop offset="0.721" stop-color="#ff0016"/><stop offset="1.000" stop-color="#ff0006"/></linearGradient><rect x="1254" y="257" width="655" height="4.5" fill="url(#c27)"/>
<linearGradient id="c28"><stop offset="0.000" stop-color="#00ff8e"/><stop offset="0.219" stop-color="#02ffab"/><stop offset="0.269" stop-color="#6bffb6"/><stop offset="0.312" stop-color="#d9ffc2"/><stop offset="0.326" stop-color="#fffdc4"/><stop offset="0.349" stop-color="#ffc49e"/><stop offset="0.381" stop-color="#ff8f7b"/><stop offset="0.427" stop-color="#ff5f5b"/><stop offset="0.495" stop-color="#ff363f"/><stop offset="0.606" stop-color="#ff1127"/><stop offset="0.716" stop-color="#ff0019"/><stop offset="1.000" stop-color="#ff0008"/></linearGradient><rect x="1255" y="261" width="654" height="4.5" fill="url(#c28)"/>
<linearGradient id="c29"><stop offset="0.000" stop-color="#00ff95"/><stop offset="0.214" stop-color="#00ffb5"/><stop offset="0.220" stop-color="#04ffb6"/><stop offset="0.271" stop-color="#6effc2"/><stop offset="0.313" stop-color="#deffd0"/><stop offset="0.324" stop-color="#feffd3"/><stop offset="0.349" stop-color="#ffc2a8"/><stop offset="0.381" stop-color="#ff8d83"/><stop offset="0.427" stop-color="#ff5e61"/><stop offset="0.495" stop-color="#ff3443"/><stop offset="0.606" stop-color="#ff112a"/><stop offset="0.711" stop-color="#ff001c"/><stop offset="1.000" stop-color="#ff000a"/></linearGradient><rect x="1255" y="265" width="654" height="4.5" fill="url(#c29)"/>
<linearGradient id="c30"><stop offset="0.000" stop-color="#00ff9c"/><stop offset="0.205" stop-color="#00ffbd"/><stop offset="0.219" stop-color="#02ffc1"/><stop offset="0.268" stop-color="#6affce"/><stop offset="0.309" stop-color="#d6ffdc"/><stop offset="0.323" stop-color="#fffee1"/><stop offset="0.346" stop-color="#ffc4b5"/><stop offset="0.377" stop-color="#ff908e"/><stop offset="0.421" stop-color="#ff606a"/><stop offset="0.487" stop-color="#ff374b"/><stop offset="0.593" stop-color="#ff132f"/><stop offset="0.704" stop-color="#ff001f"/><stop offset="1.000" stop-color="#ff000b"/></linearGradient><rect x="1256" y="269" width="653" height="4.5" fill="url(#c30)"/>
<linearGradient id="c31"><stop offset="0.000" stop-color="#00ffa3"/><stop offset="0.196" stop-color="#00ffc6"/><stop offset="0.218" stop-color="#01ffcc"/><stop offset="0.267" stop-color="#69ffdb"/><stop offset="0.308" stop-color="#d7ffea"/><stop offset="0.322" stop-color="#fffdee"/><stop offset="0.345" stop-color="#ffc2bf"/><stop offset="0.376" stop-color="#ff8e96"/><stop offset="0.420" stop-color="#ff5f70"/><stop offset="0.486" stop-color="#ff364f"/><stop offset="0.592" stop-color="#ff1233"/><stop offset="0.699" stop-color="#ff0022"/><stop offset="1.000" stop-color="#ff000d"/></linearGradient><rect x="1257" y="273" width="652" height="4.5" fill="url(#c31)"/>
<linearGradient id="c32"><stop offset="0.000" stop-color="#00ffab"/><stop offset="0.189" stop-color="#00ffcf"/><stop offset="0.218" stop-color="#02ffd7"/><stop offset="0.266" stop-color="#69ffe7"/><stop offset="0.307" stop-color="#d8fff9"/><stop offset="0.320" stop-color="#feffff"/><stop offset="0.344" stop-color="#ffc0ca"/><stop offset="0.375" stop-color="#ff8d9e"/><stop offset="0.419" stop-color="#ff5d77"/><stop offset="0.485" stop-color="#ff3454"/><stop offset="0.591" stop-color="#ff1136"/><stop offset="0.694" stop-color="#ff0026"/><stop offset="1.000" stop-color="#ff000e"/></linearGradient><rect x="1258" y="277" width="651" height="4.5" fill="url(#c32)"/>
<linearGradient id="c33"><stop offset="0.000" stop-color="#00ffb2"/><stop offset="0.182" stop-color="#00ffd8"/><stop offset="0.218" stop-color="#01ffe3"/><stop offset="0.265" stop-color="#68fff5"/><stop offset="0.298" stop-color="#bbfbff"/><stop offset="0.326" stop-color="#ffecfd"/><stop offset="0.350" stop-color="#ffb2ca"/><stop offset="0.384" stop-color="#ff7f9c"/><stop offset="0.434" stop-color="#ff5174"/><stop offset="0.508" stop-color="#ff2a50"/><stop offset="0.630" stop-color="#ff0832"/><stop offset="0.699" stop-color="#ff0028"/><stop offset="1.000" stop-color="#ff0010"/></linearGradient><rect x="1259" y="281" width="648" height="4.5" fill="url(#c33)"/>
<linearGradient id="c34"><stop offset="0.000" stop-color="#00ffba"/><stop offset="0.177" stop-color="#00ffe2"/><stop offset="0.219" stop-color="#02ffef"/><stop offset="0.267" stop-color="#6afbff"/><stop offset="0.331" stop-color="#ffdefe"/><stop offset="0.357" stop-color="#ffa6ca"/><stop offset="0.394" stop-color="#ff739b"/><stop offset="0.449" stop-color="#ff4771"/><stop offset="0.533" stop-color="#ff204d"/><stop offset="0.671" stop-color="#ff002f"/><stop offset="0.941" stop-color="#ff0015"/><stop offset="1.000" stop-color="#ff0012"/></linearGradient><rect x="1260" y="285" width="644" height="4.5" fill="url(#c34)"/>
<linearGradient id="c35"><stop offset="0.000" stop-color="#00ffc2"/><stop offset="0.170" stop-color="#00ffea"/><stop offset="0.219" stop-color="#00fffb"/><stop offset="0.266" stop-color="#61efff"/><stop offset="0.338" stop-color="#ffcdfc"/><stop offset="0.366" stop-color="#ff97c8"/><stop offset="0.406" stop-color="#ff6798"/><stop offset="0.466" stop-color="#ff3c6e"/><stop offset="0.559" stop-color="#ff1749"/><stop offset="0.680" stop-color="#ff0031"/><stop offset="0.948" stop-color="#ff0016"/><stop offset="1.000" stop-color="#ff0014"/></linearGradient><rect x="1261" y="289" width="640" height="4.5" fill="url(#c35)"/>
<linearGradient id="c36"><stop offset="0.000" stop-color="#00ffca"/><stop offset="0.165" stop-color="#00fff4"/><stop offset="0.206" stop-color="#00fbff"/><stop offset="0.220" stop-color="#02f6ff"/><stop offset="0.313" stop-color="#bfcfff"/><stop offset="0.343" stop-color="#ffc0fd"/><stop offset="0.373" stop-color="#ff8dc8"/><stop offset="0.416" stop-color="#ff5e97"/><stop offset="0.479" stop-color="#ff356d"/><stop offset="0.578" stop-color="#ff1249"/><stop offset="0.683" stop-color="#ff0033"/><stop offset="0.948" stop-color="#ff0019"/><stop offset="1.000" stop-color="#ff0015"/></linearGradient><rect x="1262" y="293" width="635" height="4.5" fill="url(#c36)"/>
<linearGradient id="c37"><stop offset="0.000" stop-color="#00ffd3"/><stop offset="0.162" stop-color="#00fffe"/><stop offset="0.222" stop-color="#03eaff"/><stop offset="0.319" stop-color="#c0c3ff"/><stop offset="0.349" stop-color="#ffb5fe"/><stop offset="0.379" stop-color="#ff84ca"/><stop offset="0.422" stop-color="#ff599a"/><stop offset="0.485" stop-color="#ff3270"/><stop offset="0.585" stop-color="#ff104b"/><stop offset="0.681" stop-color="#ff0037"/><stop offset="0.935" stop-color="#ff001b"/><stop offset="1.000" stop-color="#ff0017"/></linearGradient><rect x="1263" y="297" width="631" height="4.5" fill="url(#c37)"/>
<linearGradient id="c38"><stop offset="0.000" stop-color="#00ffdc"/><stop offset="0.141" stop-color="#00fcff"/><stop offset="0.220" stop-color="#01dfff"/><stop offset="0.321" stop-color="#beb7ff"/><stop offset="0.355" stop-color="#ffa7fc"/><stop offset="0.387" stop-color="#ff79c8"/><stop offset="0.433" stop-color="#ff4f97"/><stop offset="0.502" stop-color="#ff2a6d"/><stop offset="0.610" stop-color="#ff0a49"/><stop offset="0.684" stop-color="#ff003a"/><stop offset="0.933" stop-color="#ff001e"/><stop offset="1.000" stop-color="#ff0019"/></linearGradient><rect x="1265" y="301" width="626" height="4.5" fill="url(#c38)"/>
<linearGradient id="c39"><stop offset="0.000" stop-color="#00ffe4"/><stop offset="0.108" stop-color="#00fcff"/><stop offset="0.222" stop-color="#03d5ff"/><stop offset="0.326" stop-color="#bfacff"/><stop offset="0.360" stop-color="#ff9dfd"/><stop offset="0.394" stop-color="#ff70c8"/><stop offset="0.442" stop-color="#ff4897"/><stop offset="0.513" stop-color="#ff256d"/><stop offset="0.625" stop-color="#ff0649"/><stop offset="0.691" stop-color="#ff003c"/><stop offset="0.941" stop-color="#ff001f"/><stop offset="1.000" stop-color="#ff001b"/></linearGradient><rect x="1266" y="305" width="622" height="4.5" fill="url(#c39)"/>
<linearGradient id="c40"><stop offset="0.000" stop-color="#00ffed"/><stop offset="0.076" stop-color="#00fcff"/><stop offset="0.222" stop-color="#01ccff"/><stop offset="0.330" stop-color="#bda3ff"/><stop offset="0.366" stop-color="#ff94fe"/><stop offset="0.401" stop-color="#ff68c8"/><stop offset="0.451" stop-color="#ff4197"/><stop offset="0.526" stop-color="#ff1f6d"/><stop offset="0.644" stop-color="#ff0248"/><stop offset="0.846" stop-color="#ff002a"/><stop offset="1.000" stop-color="#ff001d"/></linearGradient><rect x="1267" y="309" width="618" height="4.5" fill="url(#c40)"/>
<linearGradient id="c41"><stop offset="0.000" stop-color="#00fff6"/><stop offset="0.047" stop-color="#00fbff"/><stop offset="0.223" stop-color="#02c3ff"/><stop offset="0.338" stop-color="#c198ff"/><stop offset="0.374" stop-color="#ff88fc"/><stop offset="0.409" stop-color="#ff60c8"/><stop offset="0.462" stop-color="#ff3b97"/><stop offset="0.538" stop-color="#ff1b6d"/><stop offset="0.661" stop-color="#ff0049"/><stop offset="0.869" stop-color="#ff002a"/><stop offset="1.000" stop-color="#ff001f"/></linearGradient><rect x="1268" y="313" width="613" height="4.5" fill="url(#c41)"/>
<linearGradient id="c42"><stop offset="0.000" stop-color="#00feff"/><stop offset="0.223" stop-color="#01baff"/><stop offset="0.342" stop-color="#bf90ff"/><stop offset="0.379" stop-color="#ff80fd"/><stop offset="0.417" stop-color="#ff59c8"/><stop offset="0.471" stop-color="#ff3597"/><stop offset="0.552" stop-color="#ff166d"/><stop offset="0.663" stop-color="#ff004c"/><stop offset="0.870" stop-color="#ff002c"/><stop offset="1.000" stop-color="#ff0021"/></linearGradient><rect x="1269" y="317" width="609" height="4.5" fill="url(#c42)"/>
<linearGradient id="c43"><stop offset="0.000" stop-color="#00f5ff"/><stop offset="0.224" stop-color="#02b2ff"/><stop offset="0.346" stop-color="#c087ff"/><stop offset="0.384" stop-color="#ff78fe"/><stop offset="0.424" stop-color="#ff52c8"/><stop offset="0.480" stop-color="#ff3097"/><stop offset="0.563" stop-color="#ff126d"/><stop offset="0.664" stop-color="#ff004f"/><stop offset="0.866" stop-color="#ff002f"/><stop offset="1.000" stop-color="#ff0023"/></linearGradient><rect x="1271" y="321" width="604" height="4.5" fill="url(#c43)"/>
<linearGradient id="c44"><stop offset="0.000" stop-color="#00ecff"/><stop offset="0.223" stop-color="#01abff"/><stop offset="0.350" stop-color="#be80ff"/><stop offset="0.392" stop-color="#ff6ffc"/><stop offset="0.433" stop-color="#ff4ac6"/><stop offset="0.492" stop-color="#ff2a96"/><stop offset="0.578" stop-color="#ff0e6c"/><stop offset="0.663" stop-color="#ff0053"/><stop offset="0.860" stop-color="#ff0033"/><stop offset="1.000" stop-color="#ff0025"/></linearGradient><rect x="1272" y="325" width="600" height="4.5" fill="url(#c44)"/>
<linearGradient id="c45"><stop offset="0.000" stop-color="#00e4ff"/><stop offset="0.225" stop-color="#02a4ff"/><stop offset="0.356" stop-color="#bf78ff"/><stop offset="0.398" stop-color="#ff68fd"/><stop offset="0.440" stop-color="#ff45c8"/><stop offset="0.500" stop-color="#ff2697"/><stop offset="0.589" stop-color="#ff0b6d"/><stop offset="0.663" stop-color="#ff0057"/><stop offset="0.854" stop-color="#ff0036"/><stop offset="1.000" stop-color="#ff0028"/></linearGradient><rect x="1273" y="329" width="596" height="4.5" fill="url(#c45)"/>
<linearGradient id="c46"><stop offset="0.000" stop-color="#00dcff"/><stop offset="0.227" stop-color="#039dff"/><stop offset="0.362" stop-color="#c070ff"/><stop offset="0.404" stop-color="#ff61fe"/><stop offset="0.448" stop-color="#ff3fc8"/><stop offset="0.511" stop-color="#ff2197"/><stop offset="0.604" stop-color="#ff076d"/><stop offset="0.667" stop-color="#ff005a"/><stop offset="0.856" stop-color="#ff0038"/><stop offset="1.000" stop-color="#ff002a"/></linearGradient><rect x="1274" y="333" width="591" height="4.5" fill="url(#c46)"/>
<linearGradient id="c47"><stop offset="0.000" stop-color="#00d4ff"/><stop offset="0.225" stop-color="#0297ff"/><stop offset="0.365" stop-color="#be6aff"/><stop offset="0.411" stop-color="#ff59fc"/><stop offset="0.457" stop-color="#ff39c6"/><stop offset="0.522" stop-color="#ff1d96"/><stop offset="0.619" stop-color="#ff036c"/><stop offset="0.768" stop-color="#ff0048"/><stop offset="1.000" stop-color="#ff002c"/></linearGradient><rect x="1276" y="337" width="586" height="4.5" fill="url(#c47)"/>
<linearGradient id="c48"><stop offset="0.000" stop-color="#00cdff"/><stop offset="0.227" stop-color="#0290ff"/><stop offset="0.371" stop-color="#bf63ff"/><stop offset="0.418" stop-color="#ff53fd"/><stop offset="0.464" stop-color="#ff35c8"/><stop offset="0.531" stop-color="#ff1997"/><stop offset="0.631" stop-color="#ff016d"/><stop offset="0.787" stop-color="#ff0048"/><stop offset="1.000" stop-color="#ff002e"/></linearGradient><rect x="1277" y="341" width="582" height="4.5" fill="url(#c48)"/>
<linearGradient id="c49"><stop offset="0.000" stop-color="#00c6ff"/><stop offset="0.227" stop-color="#018bff"/><stop offset="0.377" stop-color="#c05dff"/><stop offset="0.424" stop-color="#ff4dfe"/><stop offset="0.472" stop-color="#ff30c8"/><stop offset="0.540" stop-color="#ff1698"/><stop offset="0.642" stop-color="#ff006d"/><stop offset="0.803" stop-color="#ff0049"/><stop offset="1.000" stop-color="#ff0031"/></linearGradient><rect x="1278" y="345" width="578" height="4.5" fill="url(#c49)"/>
<linearGradient id="c50"><stop offset="0.000" stop-color="#00bfff"/><stop offset="0.227" stop-color="#0285ff"/><stop offset="0.382" stop-color="#c157ff"/><stop offset="0.431" stop-color="#ff46fc"/><stop offset="0.482" stop-color="#ff2ac6"/><stop offset="0.553" stop-color="#ff1196"/><stop offset="0.644" stop-color="#ff0071"/><stop offset="0.803" stop-color="#ff004c"/><stop offset="1.000" stop-color="#ff0033"/></linearGradient><rect x="1280" y="349" width="573" height="4.5" fill="url(#c50)"/>
<linearGradient id="c51"><stop offset="0.000" stop-color="#00b9ff"/><stop offset="0.227" stop-color="#0180ff"/><stop offset="0.387" stop-color="#bf52ff"/><stop offset="0.438" stop-color="#ff41fd"/><stop offset="0.489" stop-color="#ff26c8"/><stop offset="0.562" stop-color="#ff0e98"/><stop offset="0.643" stop-color="#ff0076"/><stop offset="0.796" stop-color="#ff0050"/><stop offset="1.000" stop-color="#ff0035"/></linearGradient><rect x="1281" y="353" width="568" height="4.5" fill="url(#c51)"/>
<linearGradient id="c52"><stop offset="0.000" stop-color="#00b3ff"/><stop offset="0.227" stop-color="#027bff"/><stop offset="0.393" stop-color="#c04cff"/><stop offset="0.444" stop-color="#ff3cfe"/><stop offset="0.497" stop-color="#ff22c8"/><stop offset="0.572" stop-color="#ff0b98"/><stop offset="0.641" stop-color="#ff007b"/><stop offset="0.792" stop-color="#ff0054"/><stop offset="1.000" stop-color="#ff0038"/></linearGradient><rect x="1283" y="357" width="563" height="4.5" fill="url(#c52)"/>
<linearGradient id="c53"><stop offset="0.000" stop-color="#00adff"/><stop offset="0.229" stop-color="#0376ff"/><stop offset="0.399" stop-color="#c047ff"/><stop offset="0.453" stop-color="#ff36fd"/><stop offset="0.508" stop-color="#ff1dc6"/><stop offset="0.587" stop-color="#ff0796"/><stop offset="0.646" stop-color="#ff007e"/><stop offset="0.796" stop-color="#ff0057"/><stop offset="1.000" stop-color="#ff003a"/></linearGradient><rect x="1284" y="361" width="559" height="4.5" fill="url(#c53)"/>
<linearGradient id="c54"><stop offset="0.000" stop-color="#00a7ff"/><stop offset="0.227" stop-color="#0272ff"/><stop offset="0.403" stop-color="#bf42ff"/><stop offset="0.458" stop-color="#ff32fd"/><stop offset="0.514" stop-color="#ff1ac8"/><stop offset="0.594" stop-color="#ff0498"/><stop offset="0.664" stop-color="#ff007c"/><stop offset="0.823" stop-color="#ff0055"/><stop offset="1.000" stop-color="#ff003d"/></linearGradient><rect x="1286" y="365" width="554" height="4.5" fill="url(#c54)"/>
<linearGradient id="c55"><stop offset="0.000" stop-color="#00a2ff"/><stop offset="0.230" stop-color="#036dff"/><stop offset="0.410" stop-color="#c03eff"/><stop offset="0.468" stop-color="#ff2cfc"/><stop offset="0.526" stop-color="#ff15c7"/><stop offset="0.610" stop-color="#ff0196"/><stop offset="0.734" stop-color="#ff006c"/><stop offset="0.931" stop-color="#ff0048"/><stop offset="1.000" stop-color="#ff003f"/></linearGradient><rect x="1287" y="369" width="549" height="4.5" fill="url(#c55)"/>
<linearGradient id="c56"><stop offset="0.000" stop-color="#009cff"/><stop offset="0.228" stop-color="#0269ff"/><stop offset="0.414" stop-color="#be3aff"/><stop offset="0.474" stop-color="#ff28fd"/><stop offset="0.535" stop-color="#ff12c7"/><stop offset="0.621" stop-color="#ff0096"/><stop offset="0.750" stop-color="#ff006c"/><stop offset="0.954" stop-color="#ff0047"/><stop offset="1.000" stop-color="#ff0042"/></linearGradient><rect x="1289" y="373" width="544" height="4.5" fill="url(#c56)"/>
<linearGradient id="c57"><stop offset="0.000" stop-color="#0097ff"/><stop offset="0.230" stop-color="#0265ff"/><stop offset="0.420" stop-color="#bf35ff"/><stop offset="0.481" stop-color="#ff24fd"/><stop offset="0.543" stop-color="#ff0fc8"/><stop offset="0.622" stop-color="#ff009b"/><stop offset="0.748" stop-color="#ff0070"/><stop offset="0.946" stop-color="#ff004b"/><stop offset="1.000" stop-color="#ff0044"/></linearGradient><rect x="1290" y="377" width="540" height="4.5" fill="url(#c57)"/>
<linearGradient id="c58"><stop offset="0.000" stop-color="#0092ff"/><stop offset="0.228" stop-color="#0161ff"/><stop offset="0.426" stop-color="#c031ff"/><stop offset="0.490" stop-color="#ff1ffc"/><stop offset="0.553" stop-color="#ff0bc7"/><stop offset="0.621" stop-color="#ff00a1"/><stop offset="0.744" stop-color="#ff0075"/><stop offset="0.936" stop-color="#ff004f"/><stop offset="1.000" stop-color="#ff0047"/></linearGradient><rect x="1292" y="381" width="535" height="4.5" fill="url(#c58)"/>
<linearGradient id="c59"><stop offset="0.000" stop-color="#008eff"/><stop offset="0.230" stop-color="#025dff"/><stop offset="0.433" stop-color="#c02dff"/><stop offset="0.497" stop-color="#ff1cfd"/><stop offset="0.563" stop-color="#ff08c7"/><stop offset="0.620" stop-color="#ff00a7"/><stop offset="0.740" stop-color="#ff007a"/><stop offset="0.927" stop-color="#ff0054"/><stop offset="1.000" stop-color="#ff004a"/></linearGradient><rect x="1293" y="385" width="531" height="4.5" fill="url(#c59)"/>
<linearGradient id="c60"><stop offset="0.000" stop-color="#0089ff"/><stop offset="0.230" stop-color="#035aff"/><stop offset="0.440" stop-color="#c129ff"/><stop offset="0.505" stop-color="#ff18fd"/><stop offset="0.571" stop-color="#ff05c8"/><stop offset="0.629" stop-color="#ff00a8"/><stop offset="0.750" stop-color="#ff007c"/><stop offset="0.939" stop-color="#ff0055"/><stop offset="1.000" stop-color="#ff004d"/></linearGradient><rect x="1295" y="389" width="525" height="4.5" fill="url(#c60)"/>
<linearGradient id="c61"><stop offset="0.000" stop-color="#0085ff"/><stop offset="0.230" stop-color="#0257ff"/><stop offset="0.445" stop-color="#c025ff"/><stop offset="0.514" stop-color="#ff14fc"/><stop offset="0.583" stop-color="#ff02c7"/><stop offset="0.683" stop-color="#ff0096"/><stop offset="0.831" stop-color="#ff006c"/><stop offset="1.000" stop-color="#ff0050"/></linearGradient><rect x="1296" y="393" width="521" height="4.5" fill="url(#c61)"/>
<linearGradient id="c62"><stop offset="0.000" stop-color="#0080ff"/><stop offset="0.231" stop-color="#0353ff"/><stop offset="0.452" stop-color="#c022ff"/><stop offset="0.521" stop-color="#ff11fd"/><stop offset="0.593" stop-color="#ff00c7"/><stop offset="0.696" stop-color="#ff0096"/><stop offset="0.849" stop-color="#ff006c"/><stop offset="1.000" stop-color="#ff0052"/></linearGradient><rect x="1298" y="397" width="516" height="4.5" fill="url(#c62)"/>
<linearGradient id="c63"><stop offset="0.000" stop-color="#007cff"/><stop offset="0.229" stop-color="#0250ff"/><stop offset="0.456" stop-color="#bf1fff"/><stop offset="0.528" stop-color="#ff0dfd"/><stop offset="0.599" stop-color="#ff00c9"/><stop offset="0.703" stop-color="#ff0098"/><stop offset="0.855" stop-color="#ff006e"/><stop offset="1.000" stop-color="#ff0055"/></linearGradient><rect x="1300" y="401" width="511" height="4.5" fill="url(#c63)"/>
<linearGradient id="c64"><stop offset="0.000" stop-color="#0078ff"/><stop offset="0.231" stop-color="#024dff"/><stop offset="0.464" stop-color="#c01bff"/><stop offset="0.538" stop-color="#ff0afc"/><stop offset="0.598" stop-color="#ff00d0"/><stop offset="0.698" stop-color="#ff009f"/><stop offset="0.846" stop-color="#ff0074"/><stop offset="1.000" stop-color="#ff0058"/></linearGradient><rect x="1301" y="405" width="507" height="4.5" fill="url(#c64)"/>
<linearGradient id="c65"><stop offset="0.000" stop-color="#0074ff"/><stop offset="0.230" stop-color="#024aff"/><stop offset="0.469" stop-color="#bf18ff"/><stop offset="0.547" stop-color="#ff07fd"/><stop offset="0.601" stop-color="#ff00d5"/><stop offset="0.701" stop-color="#ff00a3"/><stop offset="0.848" stop-color="#ff0077"/><stop offset="1.000" stop-color="#ff005b"/></linearGradient><rect x="1303" y="409" width="501" height="4.5" fill="url(#c65)"/>
<linearGradient id="c66"><stop offset="0.000" stop-color="#0070ff"/><stop offset="0.230" stop-color="#0247ff"/><stop offset="0.476" stop-color="#bf15ff"/><stop offset="0.554" stop-color="#ff04fd"/><stop offset="0.635" stop-color="#ff00c7"/><stop offset="0.748" stop-color="#ff0097"/><stop offset="0.917" stop-color="#ff006d"/><stop offset="1.000" stop-color="#ff005f"/></linearGradient><rect x="1305" y="413" width="496" height="4.5" fill="url(#c66)"/>
<linearGradient id="c67"><stop offset="0.000" stop-color="#006dff"/><stop offset="0.232" stop-color="#0344ff"/><stop offset="0.486" stop-color="#c112ff"/><stop offset="0.565" stop-color="#ff01fc"/><stop offset="0.648" stop-color="#ff00c6"/><stop offset="0.766" stop-color="#ff0096"/><stop offset="0.941" stop-color="#ff006c"/><stop offset="1.000" stop-color="#ff0062"/></linearGradient><rect x="1306" y="417" width="492" height="4.5" fill="url(#c67)"/>
<linearGradient id="c68"><stop offset="0.000" stop-color="#0069ff"/><stop offset="0.230" stop-color="#0242ff"/><stop offset="0.491" stop-color="#c00fff"/><stop offset="0.573" stop-color="#ff00fd"/><stop offset="0.657" stop-color="#ff00c7"/><stop offset="0.776" stop-color="#ff0097"/><stop offset="0.955" stop-color="#ff006c"/><stop offset="1.000" stop-color="#ff0065"/></linearGradient><rect x="1308" y="421" width="487" height="4.5" fill="url(#c68)"/>
<linearGradient id="c69"><stop offset="0.000" stop-color="#0066ff"/><stop offset="0.230" stop-color="#033fff"/><stop offset="0.498" stop-color="#c10cff"/><stop offset="0.577" stop-color="#fd00ff"/><stop offset="0.674" stop-color="#ff00c4"/><stop offset="0.801" stop-color="#ff0094"/><stop offset="0.990" stop-color="#ff006a"/><stop offset="1.000" stop-color="#ff0068"/></linearGradient><rect x="1310" y="425" width="482" height="4.5" fill="url(#c69)"/>
<linearGradient id="c70"><stop offset="0.000" stop-color="#0063ff"/><stop offset="0.231" stop-color="#023dff"/><stop offset="0.505" stop-color="#c00aff"/><stop offset="0.577" stop-color="#f500ff"/><stop offset="0.595" stop-color="#ff00fb"/><stop offset="0.686" stop-color="#ff00c5"/><stop offset="0.813" stop-color="#ff0095"/><stop offset="1.000" stop-color="#ff006c"/></linearGradient><rect x="1311" y="429" width="477" height="4.5" fill="url(#c70)"/>
<linearGradient id="c71"><stop offset="0.000" stop-color="#005fff"/><stop offset="0.231" stop-color="#033aff"/><stop offset="0.513" stop-color="#c007ff"/><stop offset="0.576" stop-color="#ee00ff"/><stop offset="0.604" stop-color="#ff00fb"/><stop offset="0.697" stop-color="#ff00c5"/><stop offset="0.828" stop-color="#ff0095"/><stop offset="1.000" stop-color="#ff006f"/></linearGradient><rect x="1313" y="433" width="472" height="4.5" fill="url(#c71)"/>
<linearGradient id="c72"><stop offset="0.000" stop-color="#005cff"/><stop offset="0.229" stop-color="#0238ff"/><stop offset="0.518" stop-color="#bf05ff"/><stop offset="0.585" stop-color="#ee00ff"/><stop offset="0.612" stop-color="#ff00fc"/><stop offset="0.707" stop-color="#ff00c6"/><stop offset="0.842" stop-color="#ff0096"/><stop offset="1.000" stop-color="#ff0073"/></linearGradient><rect x="1315" y="437" width="467" height="4.5" fill="url(#c72)"/>
<linearGradient id="c73"><stop offset="0.000" stop-color="#0059ff"/><stop offset="0.229" stop-color="#0235ff"/><stop offset="0.526" stop-color="#c002ff"/><stop offset="0.621" stop-color="#ff00fc"/><stop offset="0.719" stop-color="#ff00c6"/><stop offset="0.857" stop-color="#ff0096"/><stop offset="1.000" stop-color="#ff0076"/></linearGradient><rect x="1317" y="441" width="462" height="4.5" fill="url(#c73)"/>
<linearGradient id="c74"><stop offset="0.000" stop-color="#0056ff"/><stop offset="0.231" stop-color="#0333ff"/><stop offset="0.535" stop-color="#c000ff"/><stop offset="0.631" stop-color="#ff00fd"/><stop offset="0.729" stop-color="#ff00c7"/><stop offset="0.869" stop-color="#ff0097"/><stop offset="1.000" stop-color="#ff007a"/></linearGradient><rect x="1318" y="445" width="458" height="4.5" fill="url(#c74)"/>
<linearGradient id="c75"><stop offset="0.000" stop-color="#0053ff"/><stop offset="0.230" stop-color="#0231ff"/><stop offset="0.544" stop-color="#c100ff"/><stop offset="0.644" stop-color="#ff00fc"/><stop offset="0.746" stop-color="#ff00c6"/><stop offset="0.892" stop-color="#ff0096"/><stop offset="1.000" stop-color="#ff007e"/></linearGradient><rect x="1320" y="449" width="452" height="4.5" fill="url(#c75)"/>
<linearGradient id="c76"><stop offset="0.000" stop-color="#0050ff"/><stop offset="0.230" stop-color="#032fff"/><stop offset="0.541" stop-color="#ba00ff"/><stop offset="0.653" stop-color="#ff00fc"/><stop offset="0.758" stop-color="#ff00c6"/><stop offset="0.908" stop-color="#ff0096"/><stop offset="1.000" stop-color="#ff0081"/></linearGradient><rect x="1322" y="453" width="447" height="4.5" fill="url(#c76)"/>
<linearGradient id="c77"><stop offset="0.000" stop-color="#004dff"/><stop offset="0.229" stop-color="#022dff"/><stop offset="0.538" stop-color="#b400ff"/><stop offset="0.663" stop-color="#ff00fd"/><stop offset="0.769" stop-color="#ff00c7"/><stop offset="0.921" stop-color="#ff0097"/><stop offset="1.000" stop-color="#ff0085"/></linearGradient><rect x="1324" y="457" width="442" height="4.5" fill="url(#c77)"/>
<linearGradient id="c78"><stop offset="0.000" stop-color="#004bff"/><stop offset="0.229" stop-color="#032bff"/><stop offset="0.531" stop-color="#ab00ff"/><stop offset="0.675" stop-color="#ff00fc"/><stop offset="0.785" stop-color="#ff00c6"/><stop offset="0.943" stop-color="#ff0096"/><stop offset="1.000" stop-color="#ff0089"/></linearGradient><rect x="1326" y="461" width="437" height="4.5" fill="url(#c78)"/>
<linearGradient id="c79"><stop offset="0.000" stop-color="#0048ff"/><stop offset="0.229" stop-color="#0229ff"/><stop offset="0.528" stop-color="#a400ff"/><stop offset="0.688" stop-color="#ff00fc"/><stop offset="0.801" stop-color="#ff00c6"/><stop offset="0.963" stop-color="#ff0096"/><stop offset="1.000" stop-color="#ff008e"/></linearGradient><rect x="1327" y="465" width="432" height="4.5" fill="url(#c79)"/>
<linearGradient id="c80"><stop offset="0.000" stop-color="#0046ff"/><stop offset="0.230" stop-color="#0227ff"/><stop offset="0.522" stop-color="#9d00ff"/><stop offset="0.698" stop-color="#ff00fd"/><stop offset="0.813" stop-color="#ff00c7"/><stop offset="0.977" stop-color="#ff0097"/><stop offset="1.000" stop-color="#ff0092"/></linearGradient><rect x="1329" y="469" width="427" height="4.5" fill="url(#c80)"/>
<linearGradient id="c81"><stop offset="0.000" stop-color="#0043ff"/><stop offset="0.230" stop-color="#0325ff"/><stop offset="0.517" stop-color="#9600ff"/><stop offset="0.711" stop-color="#ff00fc"/><stop offset="0.829" stop-color="#ff00c6"/><stop offset="0.998" stop-color="#ff0096"/><stop offset="1.000" stop-color="#ff0096"/></linearGradient><rect x="1331" y="473" width="422" height="4.5" fill="url(#c81)"/>
<linearGradient id="c82"><stop offset="0.000" stop-color="#0041ff"/><stop offset="0.228" stop-color="#0224ff"/><stop offset="0.511" stop-color="#8f00ff"/><stop offset="0.722" stop-color="#ff00fc"/><stop offset="0.844" stop-color="#ff00c6"/><stop offset="1.000" stop-color="#ff009a"/></linearGradient><rect x="1333" y="477" width="417" height="4.5" fill="url(#c82)"/>
<linearGradient id="c83"><stop offset="0.000" stop-color="#003eff"/><stop offset="0.228" stop-color="#0322ff"/><stop offset="0.505" stop-color="#8900ff"/><stop offset="0.733" stop-color="#ff00fd"/><stop offset="0.857" stop-color="#ff00c7"/><stop offset="1.000" stop-color="#ff009e"/></linearGradient><rect x="1335" y="481" width="412" height="4.5" fill="url(#c83)"/>
<linearGradient id="c84"><stop offset="0.000" stop-color="#003cff"/><stop offset="0.227" stop-color="#0220ff"/><stop offset="0.500" stop-color="#8300ff"/><stop offset="0.749" stop-color="#ff00fc"/><stop offset="0.877" stop-color="#ff00c6"/><stop offset="1.000" stop-color="#ff00a3"/></linearGradient><rect x="1337" y="485" width="406" height="4.5" fill="url(#c84)"/>
<linearGradient id="c85"><stop offset="0.000" stop-color="#0039ff"/><stop offset="0.227" stop-color="#031fff"/><stop offset="0.494" stop-color="#7d00ff"/><stop offset="0.761" stop-color="#ff00fc"/><stop offset="0.893" stop-color="#ff00c6"/><stop offset="1.000" stop-color="#ff00a8"/></linearGradient><rect x="1339" y="489" width="401" height="4.5" fill="url(#c85)"/>
<linearGradient id="c86"><stop offset="0.000" stop-color="#0037ff"/><stop offset="0.225" stop-color="#021dff"/><stop offset="0.487" stop-color="#7700ff"/><stop offset="0.773" stop-color="#ff00fd"/><stop offset="0.909" stop-color="#ff00c6"/><stop offset="1.000" stop-color="#ff00ad"/></linearGradient><rect x="1341" y="493" width="396" height="4.5" fill="url(#c86)"/>
<linearGradient id="c87"><stop offset="0.000" stop-color="#0035ff"/><stop offset="0.225" stop-color="#021cff"/><stop offset="0.481" stop-color="#7100ff"/><stop offset="0.788" stop-color="#ff00fc"/><stop offset="0.926" stop-color="#ff00c6"/><stop offset="1.000" stop-color="#ff00b1"/></linearGradient><rect x="1343" y="497" width="391" height="4.5" fill="url(#c87)"/>
<linearGradient id="c88"><stop offset="0.000" stop-color="#0033ff"/><stop offset="0.225" stop-color="#031aff"/><stop offset="0.474" stop-color="#6c00ff"/><stop offset="0.801" stop-color="#ff00fc"/><stop offset="0.943" stop-color="#ff00c6"/><stop offset="1.000" stop-color="#ff00b6"/></linearGradient><rect x="1345" y="501" width="386" height="4.5" fill="url(#c88)"/>
<linearGradient id="c89"><stop offset="0.000" stop-color="#0031ff"/><stop offset="0.224" stop-color="#0219ff"/><stop offset="0.468" stop-color="#6700ff"/><stop offset="0.816" stop-color="#ff00fd"/><stop offset="0.963" stop-color="#ff00c6"/><stop offset="1.000" stop-color="#ff00bc"/></linearGradient><rect x="1347" y="505" width="380" height="4.5" fill="url(#c89)"/>
<linearGradient id="c90"><stop offset="0.000" stop-color="#002fff"/><stop offset="0.224" stop-color="#0317ff"/><stop offset="0.461" stop-color="#6100ff"/><stop offset="0.832" stop-color="#ff00fc"/><stop offset="0.984" stop-color="#ff00c6"/><stop offset="1.000" stop-color="#ff00c1"/></linearGradient><rect x="1349" y="509" width="375" height="4.5" fill="url(#c90)"/>
<linearGradient id="c91"><stop offset="0.000" stop-color="#002dff"/><stop offset="0.222" stop-color="#0216ff"/><stop offset="0.454" stop-color="#5c00ff"/><stop offset="0.846" stop-color="#ff00fc"/><stop offset="1.000" stop-color="#ff00c7"/></linearGradient><rect x="1351" y="513" width="370" height="4.5" fill="url(#c91)"/>
<linearGradient id="c92"><stop offset="0.000" stop-color="#002bff"/><stop offset="0.222" stop-color="#0314ff"/><stop offset="0.447" stop-color="#5700ff"/><stop offset="0.860" stop-color="#ff00fd"/><stop offset="1.000" stop-color="#ff00cc"/></linearGradient><rect x="1353" y="517" width="365" height="4.5" fill="url(#c92)"/>
<linearGradient id="c93"><stop offset="0.000" stop-color="#0029ff"/><stop offset="0.222" stop-color="#0313ff"/><stop offset="0.439" stop-color="#5300ff"/><stop offset="0.878" stop-color="#ff00fc"/><stop offset="1.000" stop-color="#ff00d1"/></linearGradient><rect x="1355" y="521" width="360" height="4.5" fill="url(#c93)"/>
<linearGradient id="c94"><stop offset="0.000" stop-color="#0027ff"/><stop offset="0.220" stop-color="#0312ff"/><stop offset="0.432" stop-color="#4e00ff"/><stop offset="0.895" stop-color="#ff00fd"/><stop offset="1.000" stop-color="#ff00d8"/></linearGradient><rect x="1357" y="525" width="354" height="4.5" fill="url(#c94)"/>
<linearGradient id="c95"><stop offset="0.000" stop-color="#0025ff"/><stop offset="0.221" stop-color="#0310ff"/><stop offset="0.424" stop-color="#4a00ff"/><stop offset="0.911" stop-color="#ff00fd"/><stop offset="1.000" stop-color="#ff00de"/></linearGradient><rect x="1359" y="529" width="349" height="4.5" fill="url(#c95)"/>
<linearGradient id="c96"><stop offset="0.000" stop-color="#0023ff"/><stop offset="0.218" stop-color="#020fff"/><stop offset="0.416" stop-color="#4500ff"/><stop offset="0.930" stop-color="#ff00fc"/><stop offset="1.000" stop-color="#ff00e4"/></linearGradient><rect x="1361" y="533" width="344" height="4.5" fill="url(#c96)"/>
<linearGradient id="c97"><stop offset="0.000" stop-color="#0021ff"/><stop offset="0.218" stop-color="#030eff"/><stop offset="0.410" stop-color="#4200ff"/><stop offset="0.947" stop-color="#ff00fd"/><stop offset="1.000" stop-color="#ff00ea"/></linearGradient><rect x="1363" y="537" width="339" height="4.5" fill="url(#c97)"/>
<linearGradient id="c98"><stop offset="0.000" stop-color="#0020ff"/><stop offset="0.216" stop-color="#020dff"/><stop offset="0.401" stop-color="#3e00ff"/><stop offset="0.955" stop-color="#fe00ff"/><stop offset="1.000" stop-color="#ff00f0"/></linearGradient><rect x="1365" y="541" width="334" height="4.5" fill="url(#c98)"/>
<linearGradient id="c99"><stop offset="0.000" stop-color="#001eff"/><stop offset="0.216" stop-color="#030cff"/><stop offset="0.396" stop-color="#3a00ff"/><stop offset="0.966" stop-color="#fa00ff"/><stop offset="1.000" stop-color="#ff00f8"/></linearGradient><rect x="1367" y="545" width="328" height="4.5" fill="url(#c99)"/>
<linearGradient id="c100"><stop offset="0.000" stop-color="#001cff"/><stop offset="0.217" stop-color="#030aff"/><stop offset="0.387" stop-color="#3600ff"/><stop offset="0.972" stop-color="#f600ff"/><stop offset="1.000" stop-color="#ff00ff"/></linearGradient><rect x="1369" y="549" width="323" height="4.5" fill="url(#c100)"/>
<linearGradient id="c101"><stop offset="0.000" stop-color="#001aff"/><stop offset="0.211" stop-color="#0309ff"/><stop offset="0.379" stop-color="#3300ff"/><stop offset="0.984" stop-color="#f300ff"/><stop offset="1.000" stop-color="#f900ff"/></linearGradient><rect x="1372" y="553" width="317" height="4.5" fill="url(#c101)"/>
<linearGradient id="c102"><stop offset="0.000" stop-color="#0019ff"/><stop offset="0.212" stop-color="#0308ff"/><stop offset="0.372" stop-color="#3100ff"/><stop offset="0.994" stop-color="#f000ff"/><stop offset="1.000" stop-color="#f200ff"/></linearGradient><rect x="1374" y="557" width="312" height="4.5" fill="url(#c102)"/>
<linearGradient id="c103"><stop offset="0.000" stop-color="#0017ff"/><stop offset="0.209" stop-color="#0207ff"/><stop offset="0.366" stop-color="#2e00ff"/><stop offset="1.000" stop-color="#ea00ff"/></linearGradient><rect x="1376" y="561" width="306" height="4.5" fill="url(#c103)"/>
<linearGradient id="c104"><stop offset="0.000" stop-color="#0016ff"/><stop offset="0.209" stop-color="#0306ff"/><stop offset="0.369" stop-color="#2e00ff"/><stop offset="1.000" stop-color="#e400ff"/></linearGradient><rect x="1378" y="565" width="301" height="4.5" fill="url(#c104)"/>
<linearGradient id="c105"><stop offset="0.000" stop-color="#0014ff"/><stop offset="0.203" stop-color="#0205ff"/><stop offset="0.369" stop-color="#2e00ff"/><stop offset="1.000" stop-color="#de00ff"/></linearGradient><rect x="1381" y="569" width="295" height="4.5" fill="url(#c105)"/>
<linearGradient id="c106"><stop offset="0.000" stop-color="#0013ff"/><stop offset="0.203" stop-color="#0304ff"/><stop offset="0.403" stop-color="#3600ff"/><stop offset="1.000" stop-color="#d800ff"/></linearGradient><rect x="1383" y="573" width="290" height="4.5" fill="url(#c106)"/>
<linearGradient id="c107"><stop offset="0.000" stop-color="#0011ff"/><stop offset="0.204" stop-color="#0303ff"/><stop offset="0.937" stop-color="#c100ff"/><stop offset="1.000" stop-color="#d200ff"/></linearGradient><rect x="1385" y="577" width="285" height="4.5" fill="url(#c107)"/>
<linearGradient id="c108"><stop offset="0.000" stop-color="#000fff"/><stop offset="0.198" stop-color="#0302ff"/><stop offset="0.957" stop-color="#c000ff"/><stop offset="1.000" stop-color="#cc00ff"/></linearGradient><rect x="1388" y="581" width="278" height="4.5" fill="url(#c108)"/>
<linearGradient id="c109"><stop offset="0.000" stop-color="#000eff"/><stop offset="0.198" stop-color="#0301ff"/><stop offset="0.978" stop-color="#c100ff"/><stop offset="1.000" stop-color="#c600ff"/></linearGradient><rect x="1390" y="585" width="273" height="4.5" fill="url(#c109)"/>
<linearGradient id="c110"><stop offset="0.000" stop-color="#000dff"/><stop offset="0.194" stop-color="#0300ff"/><stop offset="1.000" stop-color="#c100ff"/></linearGradient><rect x="1392" y="589" width="268" height="4.5" fill="url(#c110)"/>
<linearGradient id="c111"><stop offset="0.000" stop-color="#000bff"/><stop offset="0.191" stop-color="#0300ff"/><stop offset="1.000" stop-color="#bc00ff"/></linearGradient><rect x="1395" y="593" width="262" height="4.5" fill="url(#c111)"/>
<linearGradient id="c112"><stop offset="0.000" stop-color="#000aff"/><stop offset="0.191" stop-color="#0300ff"/><stop offset="1.000" stop-color="#b600ff"/></linearGradient><rect x="1397" y="597" width="257" height="4.5" fill="url(#c112)"/>
<linearGradient id="c113"><stop offset="0.000" stop-color="#0008ff"/><stop offset="0.184" stop-color="#0300ff"/><stop offset="1.000" stop-color="#b100ff"/></linearGradient><rect x="1400" y="601" width="250" height="4.5" fill="url(#c113)"/>
<linearGradient id="c114"><stop offset="0.000" stop-color="#0007ff"/><stop offset="0.184" stop-color="#0300ff"/><stop offset="1.000" stop-color="#ac00ff"/></linearGradient><rect x="1402" y="605" width="245" height="4.5" fill="url(#c114)"/>
<linearGradient id="c115"><stop offset="0.000" stop-color="#0006ff"/><stop offset="0.179" stop-color="#0300ff"/><stop offset="1.000" stop-color="#a700ff"/></linearGradient><rect x="1404" y="609" width="240" height="4.5" fill="url(#c115)"/>
<linearGradient id="c116"><stop offset="0.000" stop-color="#0004ff"/><stop offset="0.175" stop-color="#0300ff"/><stop offset="1.000" stop-color="#a200ff"/></linearGradient><rect x="1407" y="613" width="234" height="4.5" fill="url(#c116)"/>
<linearGradient id="c117"><stop offset="0.000" stop-color="#0003ff"/><stop offset="0.171" stop-color="#0300ff"/><stop offset="1.000" stop-color="#9d00ff"/></linearGradient><rect x="1410" y="617" width="228" height="4.5" fill="url(#c117)"/>
<linearGradient id="c118"><stop offset="0.000" stop-color="#0002ff"/><stop offset="0.167" stop-color="#0300ff"/><stop offset="1.000" stop-color="#9800ff"/></linearGradient><rect x="1412" y="621" width="222" height="4.5" fill="url(#c118)"/>
<linearGradient id="c119"><stop offset="0.000" stop-color="#0000ff"/><stop offset="0.162" stop-color="#0300ff"/><stop offset="1.000" stop-color="#9400ff"/></linearGradient><rect x="1415" y="625" width="216" height="4.5" fill="url(#c119)"/>
<linearGradient id="c120"><stop offset="0.000" stop-color="#0000ff"/><stop offset="0.152" stop-color="#0300ff"/><stop offset="1.000" stop-color="#8f00ff"/></linearGradient><rect x="1418" y="629" width="210" height="4.5" fill="url(#c120)"/>
<linearGradient id="c121"><stop offset="0.000" stop-color="#0000ff"/><stop offset="0.151" stop-color="#0300ff"/><stop offset="1.000" stop-color="#8b00ff"/></linearGradient><rect x="1420" y="633" width="205" height="4.5" fill="url(#c121)"/>
<linearGradient id="c122"><stop offset="0.000" stop-color="#0000ff"/><stop offset="0.146" stop-color="#0300ff"/><stop offset="1.000" stop-color="#8700ff"/></linearGradient><rect x="1423" y="637" width="199" height="4.5" fill="url(#c122)"/>
<linearGradient id="c123"><stop offset="0.000" stop-color="#0000ff"/><stop offset="0.141" stop-color="#0400ff"/><stop offset="1.000" stop-color="#8200ff"/></linearGradient><rect x="1426" y="641" width="192" height="4.5" fill="url(#c123)"/>
<linearGradient id="c124"><stop offset="0.000" stop-color="#0000ff"/><stop offset="0.129" stop-color="#0300ff"/><stop offset="1.000" stop-color="#7e00ff"/></linearGradient><rect x="1429" y="645" width="186" height="4.5" fill="url(#c124)"/>
<linearGradient id="c125"><stop offset="0.000" stop-color="#0000ff"/><stop offset="0.122" stop-color="#0400ff"/><stop offset="1.000" stop-color="#7a00ff"/></linearGradient><rect x="1432" y="649" width="180" height="4.5" fill="url(#c125)"/>
<linearGradient id="c126"><stop offset="0.000" stop-color="#0000ff"/><stop offset="0.115" stop-color="#0400ff"/><stop offset="1.000" stop-color="#7700ff"/></linearGradient><rect x="1435" y="653" width="174" height="4.5" fill="url(#c126)"/>
<linearGradient id="c127"><stop offset="0.000" stop-color="#0000ff"/><stop offset="0.108" stop-color="#0400ff"/><stop offset="1.000" stop-color="#7200ff"/></linearGradient><rect x="1438" y="657" width="167" height="4.5" fill="url(#c127)"/>
<linearGradient id="c128"><stop offset="0.000" stop-color="#0000ff"/><stop offset="0.112" stop-color="#0600ff"/><stop offset="1.000" stop-color="#6e00ff"/></linearGradient><rect x="1441" y="661" width="161" height="4.5" fill="url(#c128)"/>
<linearGradient id="c129"><stop offset="0.000" stop-color="#0000ff"/><stop offset="0.116" stop-color="#0800ff"/><stop offset="1.000" stop-color="#6b00ff"/></linearGradient><rect x="1444" y="665" width="155" height="4.5" fill="url(#c129)"/>
<linearGradient id="c130"><stop offset="0.000" stop-color="#0000ff"/><stop offset="1.000" stop-color="#6700ff"/></linearGradient><rect x="1448" y="669" width="148" height="4.5" fill="url(#c130)"/>
<linearGradient id="c131"><stop offset="0.000" stop-color="#0000ff"/><stop offset="1.000" stop-color="#6400ff"/></linearGradient><rect x="1451" y="673" width="142" height="4.5" fill="url(#c131)"/>
<linearGradient id="c132"><stop offset="0.000" stop-color="#0200ff"/><stop offset="1.000" stop-color="#6000ff"/></linearGradient><rect x="1455" y="677" width="134" height="4.5" fill="url(#c132)"/>
<linearGradient id="c133"><stop offset="0.000" stop-color="#0300ff"/><stop offset="1.000" stop-color="#5c00ff"/></linearGradient><rect x="1458" y="681" width="128" height="4.5" fill="url(#c133)"/>
<linearGradient id="c134"><stop offset="0.000" stop-color="#0600ff"/><stop offset="1.000" stop-color="#5900ff"/></linearGradient><rect x="1462" y="685" width="121" height="4.5" fill="url(#c134)"/>
<linearGradient id="c135"><stop offset="0.000" stop-color="#0700ff"/><stop offset="1.000" stop-color="#5600ff"/></linearGradient><rect x="1465" y="689" width="115" height="4.5" fill="url(#c135)"/>
<linearGradient id="c136"><stop offset="0.000" stop-color="#0900ff"/><stop offset="1.000" stop-color="#5300ff"/></linearGradient><rect x="1469" y="693" width="108" height="4.5" fill="url(#c136)"/>
<linearGradient id="c137"><stop offset="0.000" stop-color="#0c00ff"/><stop offset="1.000" stop-color="#4f00ff"/></linearGradient><rect x="1473" y="697" width="100" height="4.5" fill="url(#c137)"/>
<linearGradient id="c138"><stop offset="0.000" stop-color="#0e00ff"/><stop offset="1.000" stop-color="#4c00ff"/></linearGradient><rect x="1477" y="701" width="93" height="4.5" fill="url(#c138)"/>
<linearGradient id="c139"><stop offset="0.000" stop-color="#1000ff"/><stop offset="1.000" stop-color="#4900ff"/></linearGradient><rect x="1481" y="705" width="86" height="4.5" fill="url(#c139)"/>
<linearGradient id="c140"><stop offset="0.000" stop-color="#1200ff"/><stop offset="1.000" stop-color="#4600ff"/></linearGradient><rect x="1485" y="709" width="79" height="4.5" fill="url(#c140)"/>
<linearGradient id="c141"><stop offset="0.000" stop-color="#1400ff"/><stop offset="1.000" stop-color="#4300ff"/></linearGradient><rect x="1489" y="713" width="72" height="4.5" fill="url(#c141)"/>
<linearGradient id="c142"><stop offset="0.000" stop-color="#1600ff"/><stop offset="1.000" stop-color="#4000ff"/></linearGradient><rect x="1493" y="717" width="64" height="4.5" fill="url(#c142)"/>
<linearGradient id="c143"><stop offset="0.000" stop-color="#1800ff"/><stop offset="1.000" stop-color="#3d00ff"/></linearGradient><rect x="1497" y="721" width="57" height="4.5" fill="url(#c143)"/>
<linearGradient id="c144"><stop offset="0.000" stop-color="#1a00ff"/><stop offset="1.000" stop-color="#3a00ff"/></linearGradient><rect x="1501" y="725" width="50" height="4.5" fill="url(#c144)"/>
<linearGradient id="c145"><stop offset="0.000" stop-color="#1c00ff"/><stop offset="1.000" stop-color="#3700ff"/></linearGradient><rect x="1505" y="729" width="43" height="4.5" fill="url(#c145)"/>
<linearGradient id="c146"><stop offset="0.000" stop-color="#1e00ff"/><stop offset="1.000" stop-color="#3500ff"/></linearGradient><rect x="1509" y="733" width="36" height="4.5" fill="url(#c146)"/>
<linearGradient id="c147"><stop offset="0.000" stop-color="#2000ff"/><stop offset="1.000" stop-color="#3100ff"/></linearGradient><rect x="1513" y="737" width="28" height="4.5" fill="url(#c147)"/>
<linearGradient id="c148"><stop offset="0.000" stop-color="#2200ff"/><stop offset="1.000" stop-color="#2f00ff"/></linearGradient><rect x="1517" y="741" width="21" height="4.5" fill="url(#c148)"/>
<linearGradient id="c149"><stop offset="0.000" stop-color="#2400ff"/><stop offset="1.000" stop-color="#2c00ff"/></linearGradient><rect x="1521" y="745" width="14" height="4.5" fill="url(#c149)"/>
</g></g>
<path d="M1530.9 740.9 L1530.8 741.0 L1530.8 741.0 L1530.8 741.0 L1530.7 741.0 L1530.7 741.1 L1530.6 741.1 L1530.6 741.2 L1530.5 741.2 L1530.5 741.3 L1530.4 741.3 L1530.3 741.3 L1530.3 741.4 L1530.2 741.4 L1530.1 741.5 L1530.0 741.5 L1529.9 741.5 L1529.8 741.6 L1529.7 741.6 L1529.6 741.6 L1529.5 741.6 L1529.4 741.6 L1529.3 741.6 L1529.1 741.6 L1529.0 741.6 L1528.8 741.6 L1528.7 741.6 L1528.5 741.6 L1528.4 741.6 L1528.2 741.6 L1528.0 741.6 L1527.8 741.6 L1527.6 741.5 L1527.3 741.4 L1527.1 741.3 L1526.7 741.2 L1526.4 741.0 L1526.0 740.7 L1525.5 740.4 L1525.0 740.1 L1524.5 739.6 L1523.8 739.1 L1523.2 738.5 L1522.4 737.9 L1521.6 737.1 L1520.8 736.3 L1519.8 735.4 L1518.9 734.5 L1517.8 733.5 L1516.7 732.3 L1515.5 731.1 L1514.2 729.9 L1512.9 728.5 L1511.5 727.0 L1510.0 725.5 L1508.4 723.9 L1506.7 722.2 L1505.0 720.4 L1503.1 718.6 L1501.2 716.6 L1499.1 714.6 L1496.9 712.4 L1494.7 710.2 L1492.3 707.8 L1489.9 705.4 L1487.3 702.8 L1484.6 700.1 L1481.8 697.3 L1478.8 694.4 L1475.8 691.2 L1472.6 687.9 L1469.2 684.4 L1465.7 680.6 L1462.0 676.6 L1458.1 672.3 L1454.1 667.6 L1449.9 662.7 L1445.5 657.3 L1440.9 651.5 L1436.0 645.2 L1430.9 638.4 L1425.6 631.0 L1420.0 622.9 L1414.1 614.0 L1407.9 604.5 L1401.4 594.1 L1394.7 582.9 L1387.7 571.0 L1380.5 558.5 L1373.2 545.3 L1365.8 531.6 L1358.4 517.4 L1350.9 502.7 L1343.4 487.7 L1336.0 472.3 L1328.7 456.6 L1321.6 440.8 L1314.7 424.9 L1307.9 409.1 L1301.5 393.4 L1295.4 377.9 L1289.6 362.8 L1284.2 348.1 L1279.2 333.9 L1274.7 320.3 L1270.7 307.4 L1267.0 295.0 L1263.8 283.3 L1261.0 272.2 L1258.5 261.8 L1256.5 252.0 L1254.7 242.8 L1253.4 234.3 L1252.3 226.4 L1251.5 219.2 L1251.1 212.5 L1250.9 206.5 L1251.0 200.9 L1251.3 195.8 L1251.9 191.1 L1252.8 186.9 L1253.9 183.1 L1255.2 179.5 L1256.8 176.4 L1258.5 173.5 L1260.4 170.9 L1262.5 168.6 L1264.8 166.6 L1267.2 164.8 L1269.8 163.3 L1272.5 162.0 L1275.3 160.9 L1278.2 160.0 L1281.2 159.4 L1284.2 158.8 L1287.4 158.5 L1290.6 158.2 L1293.8 158.0 L1297.1 157.9 L1300.4 157.9 L1303.7 157.9 L1307.1 158.0 L1310.4 158.0 L1313.7 158.1 L1317.1 158.2 L1320.5 158.3 L1323.9 158.4 L1327.4 158.6 L1330.9 158.8 L1334.4 159.0 L1338.0 159.2 L1341.7 159.5 L1345.4 159.8 L1349.2 160.2 L1353.1 160.6 L1357.0 161.0 L1361.1 161.4 L1365.2 161.8 L1369.3 162.3 L1373.6 162.8 L1377.9 163.3 L1382.4 163.9 L1386.9 164.4 L1391.5 165.0 L1396.3 165.6 L1401.1 166.2 L1406.0 166.9 L1411.1 167.5 L1416.2 168.2 L1421.5 168.9 L1426.9 169.6 L1432.4 170.4 L1438.0 171.1 L1443.8 171.9 L1449.7 172.7 L1455.7 173.5 L1461.8 174.4 L1468.1 175.3 L1474.5 176.1 L1481.0 177.0 L1487.6 178.0 L1494.4 178.9 L1501.3 179.9 L1508.4 180.9 L1515.5 181.9 L1522.9 182.9 L1530.3 183.9 L1537.9 185.0 L1545.6 186.1 L1553.4 187.1 L1561.4 188.3 L1569.5 189.4 L1577.6 190.5 L1585.8 191.7 L1594.1 192.8 L1602.5 194.0 L1610.9 195.1 L1619.4 196.3 L1627.8 197.5 L1636.3 198.7 L1644.8 199.9 L1653.3 201.1 L1661.8 202.3 L1670.2 203.4 L1678.6 204.6 L1686.9 205.8 L1695.2 206.9 L1703.4 208.1 L1711.5 209.2 L1719.5 210.3 L1727.3 211.4 L1735.0 212.5 L1742.6 213.5 L1750.0 214.5 L1757.2 215.5 L1764.3 216.5 L1771.1 217.5 L1777.7 218.4 L1784.1 219.3 L1790.3 220.2 L1796.3 221.0 L1802.1 221.8 L1807.7 222.6 L1813.1 223.4 L1818.3 224.1 L1823.3 224.8 L1828.1 225.5 L1832.7 226.1 L1837.2 226.7 L1841.5 227.3 L1845.6 227.9 L1849.6 228.4 L1853.4 229.0 L1857.2 229.5 L1860.8 230.0 L1864.3 230.5 L1867.7 231.0 L1871.1 231.4 L1874.3 231.9 L1877.4 232.3 L1880.3 232.7 L1883.2 233.1 L1885.9 233.5 L1888.6 233.9 L1891.1 234.2 L1893.4 234.6 L1895.7 234.9 L1897.9 235.2 L1899.9 235.4 L1901.8 235.7 L1903.7 236.0 L1905.4 236.2 L1907.1 236.4 L1908.7 236.7 L1910.2 236.9 L1911.6 237.1 L1912.9 237.2 L1914.1 237.4 L1915.3 237.6 L1916.4 237.7 L1917.4 237.9 L1918.4 238.0 L1919.2 238.1 L1920.0 238.3 L1920.8 238.4 L1921.5 238.4 L1922.1 238.5 L1922.7 238.6 L1923.2 238.7 L1923.7 238.8 L1924.2 238.8 L1924.7 238.9 L1925.2 239.0 L1925.7 239.0 L1926.1 239.1 L1926.6 239.2 L1927.0 239.2 L1927.5 239.3 L1927.9 239.3 L1928.3 239.4 L1928.7 239.5 L1929.1 239.5 L1929.4 239.6 L1929.8 239.6 L1930.1 239.7 L1930.5 239.7 L1930.8 239.8 L1931.1 239.8 L1931.4 239.8 L1931.6 239.9 L1931.8 239.9 L1932.0 239.9 L1932.2 240.0 L1932.4 240.0 L1932.5 240.0 L1932.6 240.0 L1932.6 240.0 L1932.7 240.0 L1932.7 240.0 L1932.6 240.0Z M1743.4 223.2L1386.4 182.7L1441.6 596.4Z" fill="#000" fill-opacity="0.4" fill-rule="evenodd"/>
</g>
<path d="M1249.4 757.9V144H1908.4V757.9" fill="none" stroke="#999" stroke-width="1.5"/>
<path d="M1243.4 757.9H1908.4" fill="none" stroke="#ccc" stroke-width="1.5"/>
<path d="M1249.4 757.9v7.500" stroke="#ddd" stroke-width="1.6"/>
<text x="1249.4" y="785.0" font-size="17.5" text-anchor="middle" fill="#ddd" textLength="8.3" lengthAdjust="spacingAndGlyphs">0</text>
<path d="M1243.4 757.9h6" stroke="#ddd" stroke-width="1.5"/>
<text x="1242.4" y="765.6" font-size="17.5" text-anchor="end" fill="#ddd" textLength="8.3" lengthAdjust="spacingAndGlyphs">0</text>
<path d="M1304.2 757.9v7.500" stroke="#ddd" stroke-width="1.6"/>
<text x="1304.2" y="785.0" font-size="17.5" text-anchor="middle" fill="#ddd" textLength="29.0" lengthAdjust="spacingAndGlyphs">0.05</text>
<path d="M1243.4 706.8h6" stroke="#ddd" stroke-width="1.5"/>
<text x="1242.4" y="714.5" font-size="17.5" text-anchor="end" fill="#ddd" textLength="29.0" lengthAdjust="spacingAndGlyphs">0.05</text>
<path d="M1359.0 757.9v7.500" stroke="#ddd" stroke-width="1.6"/>
<text x="1359.0" y="785.0" font-size="17.5" text-anchor="middle" fill="#ddd" textLength="20.7" lengthAdjust="spacingAndGlyphs">0.1</text>
<path d="M1243.4 655.6h6" stroke="#ddd" stroke-width="1.5"/>
<text x="1242.4" y="663.4" font-size="17.5" text-anchor="end" fill="#ddd" textLength="20.7" lengthAdjust="spacingAndGlyphs">0.1</text>
<path d="M1413.8 757.9v7.500" stroke="#ddd" stroke-width="1.6"/>
<text x="1413.8" y="785.0" font-size="17.5" text-anchor="middle" fill="#ddd" textLength="29.0" lengthAdjust="spacingAndGlyphs">0.15</text>
<path d="M1243.4 604.5h6" stroke="#ddd" stroke-width="1.5"/>
<text x="1242.4" y="612.2" font-size="17.5" text-anchor="end" fill="#ddd" textLength="29.0" lengthAdjust="spacingAndGlyphs">0.15</text>
<path d="M1468.6 757.9v7.500" stroke="#ddd" stroke-width="1.6"/>
<text x="1468.6" y="785.0" font-size="17.5" text-anchor="middle" fill="#ddd" textLength="20.7" lengthAdjust="spacingAndGlyphs">0.2</text>
<path d="M1243.4 553.4h6" stroke="#ddd" stroke-width="1.5"/>
<text x="1242.4" y="561.1" font-size="17.5" text-anchor="end" fill="#ddd" textLength="20.7" lengthAdjust="spacingAndGlyphs">0.2</text>
<path d="M1523.4 757.9v7.500" stroke="#ddd" stroke-width="1.6"/>
<text x="1523.4" y="785.0" font-size="17.5" text-anchor="middle" fill="#ddd" textLength="29.0" lengthAdjust="spacingAndGlyphs">0.25</text>
<path d="M1243.4 502.3h6" stroke="#ddd" stroke-width="1.5"/>
<text x="1242.4" y="510.0" font-size="17.5" text-anchor="end" fill="#ddd" textLength="29.0" lengthAdjust="spacingAndGlyphs">0.25</text>
<path d="M1578.2 757.9v7.500" stroke="#ddd" stroke-width="1.6"/>
<text x="1578.2" y="785.0" font-size="17.5" text-anchor="middle" fill="#ddd" textLength="20.7" lengthAdjust="spacingAndGlyphs">0.3</text>
<path d="M1243.4 451.1h6" stroke="#ddd" stroke-width="1.5"/>
<text x="1242.4" y="458.8" font-size="17.5" text-anchor="end" fill="#ddd" textLength="20.7" lengthAdjust="spacingAndGlyphs">0.3</text>
<path d="M1633.0 757.9v7.500" stroke="#ddd" stroke-width="1.6"/>
<text x="1633.0" y="785.0" font-size="17.5" text-anchor="middle" fill="#ddd" textLength="29.0" lengthAdjust="spacingAndGlyphs">0.35</text>
<path d="M1243.4 400.0h6" stroke="#ddd" stroke-width="1.5"/>
<text x="1242.4" y="407.7" font-size="17.5" text-anchor="end" fill="#ddd" textLength="29.0" lengthAdjust="spacingAndGlyphs">0.35</text>
<path d="M1687.8 757.9v7.500" stroke="#ddd" stroke-width="1.6"/>
<text x="1687.8" y="785.0" font-size="17.5" text-anchor="middle" fill="#ddd" textLength="20.7" lengthAdjust="spacingAndGlyphs">0.4</text>
<path d="M1243.4 348.9h6" stroke="#ddd" stroke-width="1.5"/>
<text x="1242.4" y="356.6" font-size="17.5" text-anchor="end" fill="#ddd" textLength="20.7" lengthAdjust="spacingAndGlyphs">0.4</text>
<path d="M1742.6 757.9v7.500" stroke="#ddd" stroke-width="1.6"/>
<text x="1742.6" y="785.0" font-size="17.5" text-anchor="middle" fill="#ddd" textLength="29.0" lengthAdjust="spacingAndGlyphs">0.45</text>
<path d="M1243.4 297.8h6" stroke="#ddd" stroke-width="1.5"/>
<text x="1242.4" y="305.5" font-size="17.5" text-anchor="end" fill="#ddd" textLength="29.0" lengthAdjust="spacingAndGlyphs">0.45</text>
<path d="M1797.4 757.9v7.500" stroke="#ddd" stroke-width="1.6"/>
<text x="1797.4" y="785.0" font-size="17.5" text-anchor="middle" fill="#ddd" textLength="20.7" lengthAdjust="spacingAndGlyphs">0.5</text>
<path d="M1243.4 246.6h6" stroke="#ddd" stroke-width="1.5"/>
<text x="1242.4" y="254.3" font-size="17.5" text-anchor="end" fill="#ddd" textLength="20.7" lengthAdjust="spacingAndGlyphs">0.5</text>
<path d="M1852.2 757.9v7.500" stroke="#ddd" stroke-width="1.6"/>
<text x="1852.2" y="785.0" font-size="17.5" text-anchor="middle" fill="#ddd" textLength="29.0" lengthAdjust="spacingAndGlyphs">0.55</text>
<path d="M1243.4 195.5h6" stroke="#ddd" stroke-width="1.5"/>
<text x="1242.4" y="203.2" font-size="17.5" text-anchor="end" fill="#ddd" textLength="29.0" lengthAdjust="spacingAndGlyphs">0.55</text>
<text x="1561.0" y="137.0" font-size="17.5" text-anchor="middle" fill="#ddd" textLength="87.5" lengthAdjust="spacingAndGlyphs">CIE 1976 u'v'</text>
<rect x="1509.2" y="259.4" width="13.400" height="17.100" fill="none" stroke="#fff" stroke-width="1.65"/>
<rect x="1564.3" y="247.3" width="13.400" height="17.100" fill="none" stroke="#fff" stroke-width="1.65"/>
<rect x="1614.6" y="239.3" width="13.400" height="17.100" fill="none" stroke="#fff" stroke-width="1.65"/>
<rect x="1670.8" y="227.2" width="13.400" height="17.100" fill="none" stroke="#fff" stroke-width="1.65"/>
<rect x="1736.8" y="213.2" width="13.400" height="17.100" fill="none" stroke="#fff" stroke-width="1.65"/>
<rect x="1437.9" y="242.4" width="13.400" height="17.100" fill="none" stroke="#fff" stroke-width="1.65"/>
<rect x="1419.9" y="222.3" width="13.400" height="17.100" fill="none" stroke="#fff" stroke-width="1.65"/>
<rect x="1404.3" y="203.3" width="13.400" height="17.100" fill="none" stroke="#fff" stroke-width="1.65"/>
<rect x="1391.9" y="188.3" width="13.400" height="17.100" fill="none" stroke="#fff" stroke-width="1.65"/>
<rect x="1378.8" y="172.8" width="13.400" height="17.100" fill="none" stroke="#fff" stroke-width="1.65"/>
<rect x="1456.3" y="306.9" width="13.400" height="17.100" fill="none" stroke="#fff" stroke-width="1.65"/>
<rect x="1453.4" y="353.0" width="13.400" height="17.100" fill="none" stroke="#fff" stroke-width="1.65"/>
<rect x="1449.4" y="409.0" width="13.400" height="17.100" fill="none" stroke="#fff" stroke-width="1.65"/>
<rect x="1443.9" y="480.4" width="13.400" height="17.100" fill="none" stroke="#fff" stroke-width="1.65"/>
<rect x="1435.2" y="587.4" width="13.400" height="17.100" fill="none" stroke="#fff" stroke-width="1.65"/>
<rect x="1446.2" y="273.2" width="13.400" height="17.100" fill="none" stroke="#fff" stroke-width="1.65"/>
<rect x="1433.5" y="274.9" width="13.400" height="17.100" fill="none" stroke="#fff" stroke-width="1.65"/>
<rect x="1420.0" y="278.2" width="13.400" height="17.100" fill="none" stroke="#fff" stroke-width="1.65"/>
<rect x="1406.9" y="279.9" width="13.400" height="17.100" fill="none" stroke="#fff" stroke-width="1.65"/>
<rect x="1394.2" y="283.4" width="13.400" height="17.100" fill="none" stroke="#fff" stroke-width="1.65"/>
<rect x="1477.3" y="289.8" width="13.400" height="17.100" fill="none" stroke="#fff" stroke-width="1.65"/>
<rect x="1496.8" y="313.9" width="13.400" height="17.100" fill="none" stroke="#fff" stroke-width="1.65"/>
<rect x="1516.3" y="339.2" width="13.400" height="17.100" fill="none" stroke="#fff" stroke-width="1.65"/>
<rect x="1543.2" y="371.4" width="13.400" height="17.100" fill="none" stroke="#fff" stroke-width="1.65"/>
<rect x="1576.8" y="410.4" width="13.400" height="17.100" fill="none" stroke="#fff" stroke-width="1.65"/>
<rect x="1461.8" y="246.8" width="13.400" height="17.100" fill="none" stroke="#fff" stroke-width="1.65"/>
<rect x="1463.1" y="228.7" width="13.400" height="17.100" fill="none" stroke="#fff" stroke-width="1.65"/>
<rect x="1464.6" y="212.2" width="13.400" height="17.100" fill="none" stroke="#fff" stroke-width="1.65"/>
<rect x="1465.0" y="196.8" width="13.400" height="17.100" fill="none" stroke="#fff" stroke-width="1.65"/>
<rect x="1465.7" y="181.7" width="13.400" height="17.100" fill="none" stroke="#fff" stroke-width="1.65"/>
<rect x="1458.7" y="269.4" width="13.400" height="17.100" fill="none" stroke="#000" stroke-width="1.95"/>
<ellipse cx="1502.0" cy="266.0" rx="4.300" ry="5.300" fill="rgb(191,152,152)" stroke="#000" stroke-width="1.3"/>
<ellipse cx="1541.5" cy="253.8" rx="4.300" ry="5.300" fill="rgb(191,124,124)" stroke="#000" stroke-width="1.3"/>
<ellipse cx="1576.5" cy="241.8" rx="4.300" ry="5.300" fill="rgb(191,100,100)" stroke="#000" stroke-width="1.3"/>
<ellipse cx="1618.5" cy="228.5" rx="4.300" ry="5.300" fill="rgb(191,72,72)" stroke="#000" stroke-width="1.3"/>
<ellipse cx="1662.0" cy="215.0" rx="4.300" ry="5.300" fill="rgb(191,0,0)" stroke="#000" stroke-width="1.3"/>
<ellipse cx="1454.4" cy="254.0" rx="4.300" ry="5.300" fill="rgb(152,191,152)" stroke="#000" stroke-width="1.3"/>
<ellipse cx="1445.0" cy="233.8" rx="4.300" ry="5.300" fill="rgb(124,191,124)" stroke="#000" stroke-width="1.3"/>
<ellipse cx="1435.0" cy="214.8" rx="4.300" ry="5.300" fill="rgb(100,191,100)" stroke="#000" stroke-width="1.3"/>
<ellipse cx="1426.5" cy="197.9" rx="4.300" ry="5.300" fill="rgb(72,191,72)" stroke="#000" stroke-width="1.3"/>
<ellipse cx="1417.9" cy="180.8" rx="4.300" ry="5.300" fill="rgb(0,191,0)" stroke="#000" stroke-width="1.3"/>
<ellipse cx="1460.0" cy="311.8" rx="4.300" ry="5.300" fill="rgb(152,152,191)" stroke="#000" stroke-width="1.3"/>
<ellipse cx="1452.0" cy="346.9" rx="4.300" ry="5.300" fill="rgb(124,124,191)" stroke="#000" stroke-width="1.3"/>
<ellipse cx="1443.0" cy="386.5" rx="4.300" ry="5.300" fill="rgb(100,100,191)" stroke="#000" stroke-width="1.3"/>
<ellipse cx="1433.5" cy="431.9" rx="4.300" ry="5.300" fill="rgb(72,72,191)" stroke="#000" stroke-width="1.3"/>
<ellipse cx="1422.1" cy="488.0" rx="4.300" ry="5.300" fill="rgb(0,0,191)" stroke="#000" stroke-width="1.3"/>
<ellipse cx="1457.1" cy="280.8" rx="4.300" ry="5.300" fill="rgb(152,191,191)" stroke="#000" stroke-width="1.3"/>
<ellipse cx="1447.5" cy="285.0" rx="4.300" ry="5.300" fill="rgb(124,191,191)" stroke="#000" stroke-width="1.3"/>
<ellipse cx="1438.2" cy="287.8" rx="4.300" ry="5.300" fill="rgb(100,191,191)" stroke="#000" stroke-width="1.3"/>
<ellipse cx="1429.0" cy="290.8" rx="4.300" ry="5.300" fill="rgb(72,191,191)" stroke="#000" stroke-width="1.3"/>
<ellipse cx="1419.4" cy="293.0" rx="4.300" ry="5.300" fill="rgb(0,191,191)" stroke="#000" stroke-width="1.3"/>
<ellipse cx="1475.5" cy="296.3" rx="4.300" ry="5.300" fill="rgb(191,152,191)" stroke="#000" stroke-width="1.3"/>
<ellipse cx="1484.0" cy="315.0" rx="4.300" ry="5.300" fill="rgb(191,124,191)" stroke="#000" stroke-width="1.3"/>
<ellipse cx="1494.0" cy="332.0" rx="4.300" ry="5.300" fill="rgb(191,100,191)" stroke="#000" stroke-width="1.3"/>
<ellipse cx="1503.5" cy="354.0" rx="4.300" ry="5.300" fill="rgb(191,72,191)" stroke="#000" stroke-width="1.3"/>
<ellipse cx="1517.5" cy="381.0" rx="4.300" ry="5.300" fill="rgb(191,0,191)" stroke="#000" stroke-width="1.3"/>
<ellipse cx="1471.0" cy="258.6" rx="4.300" ry="5.300" fill="rgb(191,191,152)" stroke="#000" stroke-width="1.3"/>
<ellipse cx="1475.4" cy="238.9" rx="4.300" ry="5.300" fill="rgb(191,191,124)" stroke="#000" stroke-width="1.3"/>
<ellipse cx="1478.0" cy="221.9" rx="4.300" ry="5.300" fill="rgb(191,191,100)" stroke="#000" stroke-width="1.3"/>
<ellipse cx="1481.1" cy="205.8" rx="4.300" ry="5.300" fill="rgb(191,191,72)" stroke="#000" stroke-width="1.3"/>
<ellipse cx="1485.1" cy="189.4" rx="4.300" ry="5.300" fill="rgb(191,191,0)" stroke="#000" stroke-width="1.3"/>
<ellipse cx="1466.0" cy="284.8" rx="4.300" ry="5.300" fill="#fff" stroke="#000" stroke-width="1.3"/>
<rect x="1681" y="565.500" width="223.500" height="184.300" fill="#303030"/>
<clipPath id="insclip"><rect x="1683" y="567.8" width="219.5" height="179.9000000000001"/></clipPath>
<g clip-path="url(#insclip)">
<linearGradient id="n0"><stop offset="0.000" stop-color="#acff00"/><stop offset="0.826" stop-color="#fffd00"/><stop offset="1.000" stop-color="#ffeb00"/></linearGradient><rect x="1681" y="563" width="224" height="4.5" fill="url(#n0)"/>
<linearGradient id="n1"><stop offset="0.000" stop-color="#aeff00"/><stop offset="0.812" stop-color="#fffd00"/><stop offset="1.000" stop-color="#ffea00"/></linearGradient><rect x="1681" y="567" width="224" height="4.5" fill="url(#n1)"/>
<linearGradient id="n2"><stop offset="0.000" stop-color="#afff00"/><stop offset="0.799" stop-color="#fffd00"/><stop offset="1.000" stop-color="#ffe900"/></linearGradient><rect x="1681" y="571" width="224" height="4.5" fill="url(#n2)"/>
<linearGradient id="n3"><stop offset="0.000" stop-color="#b0ff00"/><stop offset="0.786" stop-color="#fffd00"/><stop offset="1.000" stop-color="#ffe700"/></linearGradient><rect x="1681" y="575" width="224" height="4.5" fill="url(#n3)"/>
<linearGradient id="n4"><stop offset="0.000" stop-color="#b1ff00"/><stop offset="0.772" stop-color="#fffd00"/><stop offset="1.000" stop-color="#ffe600"/></linearGradient><rect x="1681" y="579" width="224" height="4.5" fill="url(#n4)"/>
<linearGradient id="n5"><stop offset="0.000" stop-color="#b2ff00"/><stop offset="0.759" stop-color="#fffd00"/><stop offset="1.000" stop-color="#ffe500"/></linearGradient><rect x="1681" y="583" width="224" height="4.5" fill="url(#n5)"/>
<linearGradient id="n6"><stop offset="0.000" stop-color="#b3ff00"/><stop offset="0.746" stop-color="#fffd00"/><stop offset="1.000" stop-color="#ffe300"/></linearGradient><rect x="1681" y="587" width="224" height="4.5" fill="url(#n6)"/>
<linearGradient id="n7"><stop offset="0.000" stop-color="#b4ff01"/><stop offset="0.732" stop-color="#fffd00"/><stop offset="1.000" stop-color="#ffe200"/></linearGradient><rect x="1681" y="591" width="224" height="4.5" fill="url(#n7)"/>
<linearGradient id="n8"><stop offset="0.000" stop-color="#b5ff02"/><stop offset="0.719" stop-color="#fffd00"/><stop offset="1.000" stop-color="#ffe100"/></linearGradient><rect x="1681" y="595" width="224" height="4.5" fill="url(#n8)"/>
<linearGradient id="n9"><stop offset="0.000" stop-color="#b6ff02"/><stop offset="0.705" stop-color="#fffd00"/><stop offset="1.000" stop-color="#ffe000"/></linearGradient><rect x="1681" y="599" width="224" height="4.5" fill="url(#n9)"/>
<linearGradient id="n10"><stop offset="0.000" stop-color="#b8ff03"/><stop offset="0.415" stop-color="#e2ff00"/><stop offset="0.692" stop-color="#fffd00"/><stop offset="1.000" stop-color="#ffde00"/></linearGradient><rect x="1681" y="603" width="224" height="4.5" fill="url(#n10)"/>
<linearGradient id="n11"><stop offset="0.000" stop-color="#b9ff04"/><stop offset="0.362" stop-color="#deff00"/><stop offset="0.679" stop-color="#fffd00"/><stop offset="1.000" stop-color="#ffdd00"/></linearGradient><rect x="1681" y="607" width="224" height="4.5" fill="url(#n11)"/>
<linearGradient id="n12"><stop offset="0.000" stop-color="#baff04"/><stop offset="0.357" stop-color="#dfff00"/><stop offset="0.665" stop-color="#fffd00"/><stop offset="1.000" stop-color="#ffdc00"/></linearGradient><rect x="1681" y="611" width="224" height="4.5" fill="url(#n12)"/>
<linearGradient id="n13"><stop offset="0.000" stop-color="#bbff05"/><stop offset="0.366" stop-color="#e1ff00"/><stop offset="0.652" stop-color="#fffd00"/><stop offset="1.000" stop-color="#ffda00"/></linearGradient><rect x="1681" y="615" width="224" height="4.5" fill="url(#n13)"/>
<linearGradient id="n14"><stop offset="0.000" stop-color="#bcff05"/><stop offset="0.379" stop-color="#e4ff00"/><stop offset="0.638" stop-color="#fffd00"/><stop offset="1.000" stop-color="#ffd900"/></linearGradient><rect x="1681" y="619" width="224" height="4.5" fill="url(#n14)"/>
<linearGradient id="n15"><stop offset="0.000" stop-color="#bdff06"/><stop offset="0.402" stop-color="#e8ff00"/><stop offset="0.625" stop-color="#fffd00"/><stop offset="1.000" stop-color="#ffd800"/></linearGradient><rect x="1681" y="623" width="224" height="4.5" fill="url(#n15)"/>
<linearGradient id="n16"><stop offset="0.000" stop-color="#bfff07"/><stop offset="0.420" stop-color="#ebff00"/><stop offset="0.612" stop-color="#fffd00"/><stop offset="1.000" stop-color="#ffd700"/></linearGradient><rect x="1681" y="627" width="224" height="4.5" fill="url(#n16)"/>
<linearGradient id="n17"><stop offset="0.000" stop-color="#c0ff07"/><stop offset="0.442" stop-color="#efff00"/><stop offset="0.603" stop-color="#fffd00"/><stop offset="1.000" stop-color="#ffd500"/></linearGradient><rect x="1681" y="631" width="224" height="4.5" fill="url(#n17)"/>
<linearGradient id="n18"><stop offset="0.000" stop-color="#c1ff08"/><stop offset="0.469" stop-color="#f4ff00"/><stop offset="0.589" stop-color="#fffd00"/><stop offset="1.000" stop-color="#ffd400"/></linearGradient><rect x="1681" y="635" width="224" height="4.5" fill="url(#n18)"/>
<linearGradient id="n19"><stop offset="0.000" stop-color="#c2ff09"/><stop offset="0.491" stop-color="#f8ff00"/><stop offset="0.580" stop-color="#fffc00"/><stop offset="1.000" stop-color="#ffd300"/></linearGradient><rect x="1681" y="639" width="224" height="4.5" fill="url(#n19)"/>
<linearGradient id="n20"><stop offset="0.000" stop-color="#c4ff09"/><stop offset="0.518" stop-color="#fcff00"/><stop offset="0.607" stop-color="#fff800"/><stop offset="1.000" stop-color="#ffd200"/></linearGradient><rect x="1681" y="643" width="224" height="4.5" fill="url(#n20)"/>
<linearGradient id="n21"><stop offset="0.000" stop-color="#c5ff0a"/><stop offset="0.545" stop-color="#fffd00"/><stop offset="1.000" stop-color="#ffd000"/></linearGradient><rect x="1681" y="647" width="224" height="4.5" fill="url(#n21)"/>
<linearGradient id="n22"><stop offset="0.000" stop-color="#c6ff0b"/><stop offset="0.531" stop-color="#fffd00"/><stop offset="1.000" stop-color="#ffcf00"/></linearGradient><rect x="1681" y="651" width="224" height="4.5" fill="url(#n22)"/>
<linearGradient id="n23"><stop offset="0.000" stop-color="#c7ff0c"/><stop offset="0.518" stop-color="#fffd00"/><stop offset="1.000" stop-color="#ffce00"/></linearGradient><rect x="1681" y="655" width="224" height="4.5" fill="url(#n23)"/>
<linearGradient id="n24"><stop offset="0.000" stop-color="#c9ff0c"/><stop offset="0.504" stop-color="#fffd00"/><stop offset="1.000" stop-color="#ffcd00"/></linearGradient><rect x="1681" y="659" width="224" height="4.5" fill="url(#n24)"/>
<linearGradient id="n25"><stop offset="0.000" stop-color="#caff0d"/><stop offset="0.491" stop-color="#fffd01"/><stop offset="0.987" stop-color="#ffcd00"/><stop offset="1.000" stop-color="#ffcc00"/></linearGradient><rect x="1681" y="663" width="224" height="4.5" fill="url(#n25)"/>
<linearGradient id="n26"><stop offset="0.000" stop-color="#cbff0e"/><stop offset="0.478" stop-color="#fffd02"/><stop offset="0.973" stop-color="#ffcd00"/><stop offset="1.000" stop-color="#ffca00"/></linearGradient><rect x="1681" y="667" width="224" height="4.5" fill="url(#n26)"/>
<linearGradient id="n27"><stop offset="0.000" stop-color="#cdff0e"/><stop offset="0.464" stop-color="#fffd03"/><stop offset="0.799" stop-color="#ffdb00"/><stop offset="1.000" stop-color="#ffc900"/></linearGradient><rect x="1681" y="671" width="224" height="4.5" fill="url(#n27)"/>
<linearGradient id="n28"><stop offset="0.000" stop-color="#ceff0f"/><stop offset="0.451" stop-color="#fffd04"/><stop offset="0.781" stop-color="#ffdb00"/><stop offset="1.000" stop-color="#ffc800"/></linearGradient><rect x="1681" y="675" width="224" height="4.5" fill="url(#n28)"/>
<linearGradient id="n29"><stop offset="0.000" stop-color="#cfff10"/><stop offset="0.438" stop-color="#fffd05"/><stop offset="0.786" stop-color="#ffd900"/><stop offset="1.000" stop-color="#ffc700"/></linearGradient><rect x="1681" y="679" width="224" height="4.5" fill="url(#n29)"/>
<linearGradient id="n30"><stop offset="0.000" stop-color="#d0ff10"/><stop offset="0.424" stop-color="#fffd07"/><stop offset="0.804" stop-color="#ffd600"/><stop offset="1.000" stop-color="#ffc600"/></linearGradient><rect x="1681" y="683" width="224" height="4.5" fill="url(#n30)"/>
<linearGradient id="n31"><stop offset="0.000" stop-color="#d2ff11"/><stop offset="0.411" stop-color="#fffd08"/><stop offset="0.821" stop-color="#ffd300"/><stop offset="1.000" stop-color="#ffc400"/></linearGradient><rect x="1681" y="687" width="224" height="4.5" fill="url(#n31)"/>
<linearGradient id="n32"><stop offset="0.000" stop-color="#d3ff12"/><stop offset="0.397" stop-color="#fffd09"/><stop offset="0.844" stop-color="#ffd000"/><stop offset="1.000" stop-color="#ffc300"/></linearGradient><rect x="1681" y="691" width="224" height="4.5" fill="url(#n32)"/>
<linearGradient id="n33"><stop offset="0.000" stop-color="#d5ff13"/><stop offset="0.384" stop-color="#fffd0a"/><stop offset="0.871" stop-color="#ffcd00"/><stop offset="1.000" stop-color="#ffc200"/></linearGradient><rect x="1681" y="695" width="224" height="4.5" fill="url(#n33)"/>
<linearGradient id="n34"><stop offset="0.000" stop-color="#d6ff13"/><stop offset="0.371" stop-color="#fffd0b"/><stop offset="0.853" stop-color="#ffcd00"/><stop offset="1.000" stop-color="#ffc100"/></linearGradient><rect x="1681" y="699" width="224" height="4.5" fill="url(#n34)"/>
<linearGradient id="n35"><stop offset="0.000" stop-color="#d7ff14"/><stop offset="0.357" stop-color="#fffd0c"/><stop offset="0.839" stop-color="#ffcd00"/><stop offset="1.000" stop-color="#ffc000"/></linearGradient><rect x="1681" y="703" width="224" height="4.5" fill="url(#n35)"/>
<linearGradient id="n36"><stop offset="0.000" stop-color="#d9ff15"/><stop offset="0.344" stop-color="#fffd0d"/><stop offset="0.826" stop-color="#ffcd01"/><stop offset="1.000" stop-color="#ffbe00"/></linearGradient><rect x="1681" y="707" width="224" height="4.5" fill="url(#n36)"/>
<linearGradient id="n37"><stop offset="0.000" stop-color="#daff16"/><stop offset="0.330" stop-color="#fffd0e"/><stop offset="0.808" stop-color="#ffcd02"/><stop offset="1.000" stop-color="#ffbd00"/></linearGradient><rect x="1681" y="711" width="224" height="4.5" fill="url(#n37)"/>
<linearGradient id="n38"><stop offset="0.000" stop-color="#dcff16"/><stop offset="0.317" stop-color="#fffd0f"/><stop offset="0.795" stop-color="#ffcd02"/><stop offset="1.000" stop-color="#ffbc00"/></linearGradient><rect x="1681" y="715" width="224" height="4.5" fill="url(#n38)"/>
<linearGradient id="n39"><stop offset="0.000" stop-color="#ddff17"/><stop offset="0.304" stop-color="#fffd10"/><stop offset="0.781" stop-color="#ffcd03"/><stop offset="1.000" stop-color="#ffbb00"/></linearGradient><rect x="1681" y="719" width="224" height="4.5" fill="url(#n39)"/>
<linearGradient id="n40"><stop offset="0.000" stop-color="#deff18"/><stop offset="0.290" stop-color="#fffd11"/><stop offset="0.768" stop-color="#ffcd04"/><stop offset="1.000" stop-color="#ffba00"/></linearGradient><rect x="1681" y="723" width="224" height="4.5" fill="url(#n40)"/>
<linearGradient id="n41"><stop offset="0.000" stop-color="#e0ff19"/><stop offset="0.277" stop-color="#fffd12"/><stop offset="0.750" stop-color="#ffcd05"/><stop offset="1.000" stop-color="#ffb900"/></linearGradient><rect x="1681" y="727" width="224" height="4.5" fill="url(#n41)"/>
<linearGradient id="n42"><stop offset="0.000" stop-color="#e1ff1a"/><stop offset="0.263" stop-color="#fffd13"/><stop offset="0.737" stop-color="#ffcd06"/><stop offset="1.000" stop-color="#ffb800"/></linearGradient><rect x="1681" y="731" width="224" height="4.5" fill="url(#n42)"/>
<linearGradient id="n43"><stop offset="0.000" stop-color="#e3ff1a"/><stop offset="0.250" stop-color="#fffd14"/><stop offset="0.723" stop-color="#ffcd07"/><stop offset="1.000" stop-color="#ffb601"/></linearGradient><rect x="1681" y="735" width="224" height="4.5" fill="url(#n43)"/>
<linearGradient id="n44"><stop offset="0.000" stop-color="#e4ff1b"/><stop offset="0.237" stop-color="#fffd16"/><stop offset="0.705" stop-color="#ffcd08"/><stop offset="1.000" stop-color="#ffb502"/></linearGradient><rect x="1681" y="739" width="224" height="4.5" fill="url(#n44)"/>
<linearGradient id="n45"><stop offset="0.000" stop-color="#e6ff1c"/><stop offset="0.223" stop-color="#fffd17"/><stop offset="0.692" stop-color="#ffcd09"/><stop offset="1.000" stop-color="#ffb402"/></linearGradient><rect x="1681" y="743" width="224" height="4.5" fill="url(#n45)"/>
<linearGradient id="n46"><stop offset="0.000" stop-color="#e7ff1d"/><stop offset="0.210" stop-color="#fffd18"/><stop offset="0.679" stop-color="#ffcd0a"/><stop offset="1.000" stop-color="#ffb303"/></linearGradient><rect x="1681" y="747" width="224" height="4.5" fill="url(#n46)"/>
<linearGradient id="n47"><stop offset="0.000" stop-color="#e9ff1e"/><stop offset="0.196" stop-color="#fffd19"/><stop offset="0.665" stop-color="#ffcd0b"/><stop offset="1.000" stop-color="#ffb203"/></linearGradient><rect x="1681" y="751" width="224" height="4.5" fill="url(#n47)"/>
<path d="M1281.3 328.9L2738.9 1266.6L2738.9 328.9Z" fill="#000" fill-opacity="0.4"/>
</g>
<rect x="1683" y="567.8" width="219.5" height="179.9000000000001" fill="none" stroke="#999" stroke-width="1.5"/>
<rect x="1785.3" y="649.4" width="13.400" height="17.100" fill="none" stroke="#fff" stroke-width="1.65"/>
<ellipse cx="1870.5" cy="674.0" rx="4.300" ry="5.300" fill="rgb(200,200,0)" stroke="#000" stroke-width="1.3"/>
</svg>
</body></html>
